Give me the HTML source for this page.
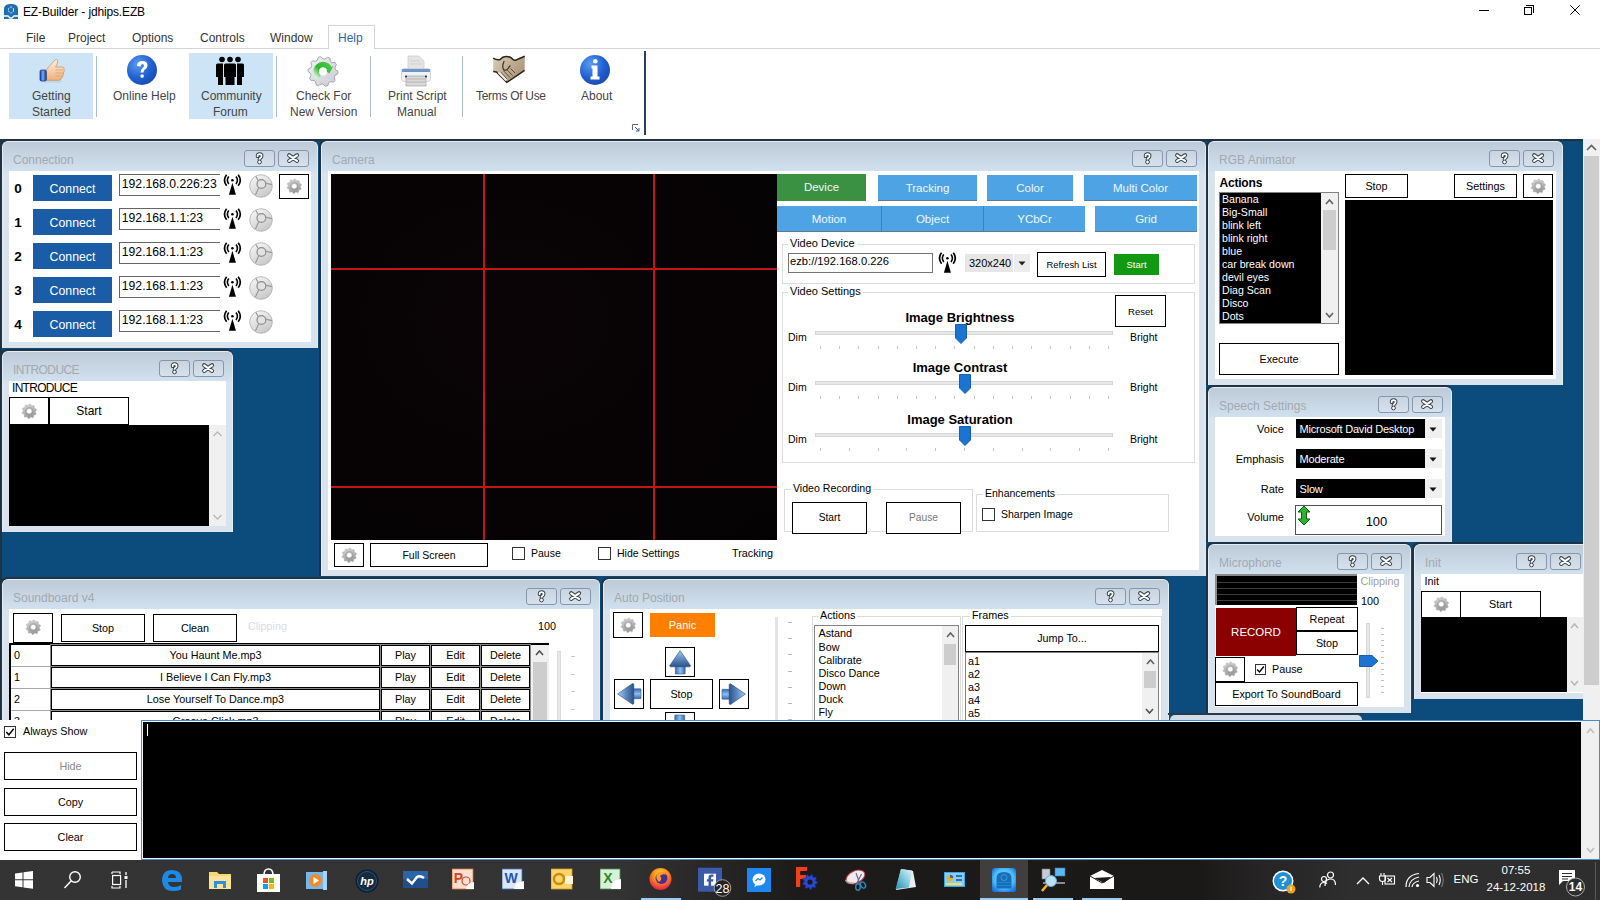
<!DOCTYPE html>
<html><head><meta charset="utf-8">
<style>
*{box-sizing:border-box;margin:0;padding:0}
html,body{width:1600px;height:900px;overflow:hidden;background:#fff;font-family:"Liberation Sans",sans-serif;font-size:12px;color:#000;position:relative}
.a{position:absolute}
.t{position:absolute;white-space:nowrap;line-height:1}
/* title bar */
#title{left:0;top:0;width:1600px;height:24px;background:#fff}
#menu{left:0;top:24px;width:1600px;height:25px;background:#fff;border-bottom:1px solid #d5d5d5}
#ribbon{left:0;top:49px;width:1600px;height:89px;background:#fff}
#desk{left:0;top:138px;width:1583px;height:582px;background:#0b4c7c;border-top:2px solid #1c3d52}
.panel{position:absolute;background:#d9e4ee;border-radius:7px 7px 0 0;overflow:hidden}
.panel .hd{position:absolute;left:0;top:0;right:0;height:30px;background:linear-gradient(#c2cfdc,#dde7f1)}
.panel .ttl{position:absolute;left:11px;top:12px;font-size:12px;color:#9aa3ab;line-height:1;white-space:nowrap}
.panel .body{position:absolute;background:#fff}
.hb{position:absolute;width:30px;height:18px;border:1px solid #8d9db0;border-radius:3px;background:linear-gradient(#e6edf4,#cdd9e5)}
.btn{position:absolute;border:2px solid #000;background:#fff;text-align:center;font-size:12px;white-space:nowrap}
#console{left:0;top:720px;width:1600px;height:138px;background:#fff}
#task{left:0;top:858px;width:1600px;height:42px;background:#2b2b2b}
</style></head><body>

<!-- TITLE BAR -->
<div id="title" class="a">
 <svg class="a" style="left:2px;top:2px" width="18" height="18" viewBox="0 0 18 18">
  <path d="M2 17 V7 Q2 2 9 2 Q16 2 16 7 V17 Z" fill="#1e6fb0"/>
  <path d="M2 14 H6 L8 16 H10 L12 14 H16" stroke="#fff" stroke-width="1.3" fill="none"/>
  <ellipse cx="9" cy="8" rx="2.6" ry="3" stroke="#d8ecff" stroke-width="1" fill="none" stroke-dasharray="2 1"/>
 </svg>
 <div class="t" style="left:23px;top:6px;font-size:12px;letter-spacing:-0.15px;color:#000">EZ-Builder - jdhips.EZB</div>
  <div class="a" style="left:1479px;top:10px;width:10px;height:1px;background:#000"></div>
 <div class="a" style="left:1524px;top:7px;width:8px;height:8px;border:1px solid #000;background:#fff"></div>
 <div class="a" style="left:1526px;top:5px;width:8px;height:8px;border-top:1px solid #000;border-right:1px solid #000"></div>
 <svg class="a" style="left:1570px;top:5px" width="10" height="10" viewBox="0 0 10 10"><path d="M0.3 0.3 L9.7 9.7 M9.7 0.3 L0.3 9.7" stroke="#000" stroke-width="1"/></svg>
</div>
<!-- MENU -->
<div id="menu" class="a">
 <div class="t" style="left:26px;top:8px;color:#333">File</div>
 <div class="t" style="left:68px;top:8px;color:#333">Project</div>
 <div class="t" style="left:132px;top:8px;color:#333">Options</div>
 <div class="t" style="left:200px;top:8px;color:#333">Controls</div>
 <div class="t" style="left:270px;top:8px;color:#333">Window</div>
 <div class="a" style="left:328px;top:1px;width:47px;height:24px;border:1px solid #d5d5d5;border-bottom:none;background:#fff"></div>
 <div class="t" style="left:338px;top:8px;color:#2a64a8">Help</div>
</div>
<div class="a" style="left:0;top:48px;width:328px;height:1px;background:#d5d5d5"></div>
<div class="a" style="left:375px;top:48px;width:1225px;height:1px;background:#d5d5d5"></div>
<!-- RIBBON -->
<div id="ribbon" class="a">
 <div class="a" style="left:9px;top:4px;width:84px;height:66px;background:#cde4f7"></div>
 <div class="a" style="left:96px;top:7px;width:1px;height:61px;background:#a9bccf"></div>
 <div class="a" style="left:189px;top:4px;width:84px;height:66px;background:#cde4f7"></div>
 <div class="a" style="left:276px;top:7px;width:1px;height:61px;background:#a9bccf"></div>
 <div class="a" style="left:370px;top:7px;width:1px;height:61px;background:#a9bccf"></div>
 <div class="a" style="left:462px;top:7px;width:1px;height:61px;background:#a9bccf"></div>
 <div class="a" style="left:644px;top:2px;width:2px;height:84px;background:#2b3d6b"></div>
 <!-- thumbs up -->
 <svg class="a" style="left:38px;top:8px" width="28" height="28" viewBox="0 0 28 28">
  <defs><linearGradient id="skin" x1="0" y1="0" x2="0" y2="1"><stop offset="0" stop-color="#fff1e4"/><stop offset="1" stop-color="#f0b07a"/></linearGradient>
  <linearGradient id="cuff" x1="0" y1="0" x2="1" y2="0"><stop offset="0" stop-color="#1a3c9c"/><stop offset=".45" stop-color="#6aaef0"/><stop offset="1" stop-color="#1a3c9c"/></linearGradient></defs>
  <ellipse cx="14" cy="24.5" rx="11" ry="1.6" fill="#b8d0e4" opacity=".6"/>
  <path d="M8 13 L17 3 Q19 1.3 19.6 3.6 Q20 6.5 17.5 10 L25 10 Q26.6 10.5 26 12.5 Q26.6 14.5 25.5 15.6 Q26 17.6 24.8 18.6 Q25 20.6 23 21.2 Q23 23.3 21 23.3 L8 23.3 Z" fill="url(#skin)" stroke="#c88a58" stroke-width=".7"/>
  <path d="M17.5 13 H25 M17.5 16 H25 M17.5 19 H23.5" stroke="#e0a070" stroke-width=".8"/>
  <rect x="2" y="13" width="6.3" height="11" rx="1.5" fill="url(#cuff)" stroke="#0e2a78" stroke-width=".7"/>
 </svg>
 <div class="t" style="left:32px;top:41px;color:#444">Getting</div>
 <div class="t" style="left:32px;top:57px;color:#444">Started</div>
 <!-- online help -->
 <svg class="a" style="left:126px;top:5px" width="32" height="32" viewBox="0 0 32 32">
  <defs><radialGradient id="bl" cx=".35" cy=".3" r=".8"><stop offset="0" stop-color="#5a9cf0"/><stop offset=".6" stop-color="#1f5ed0"/><stop offset="1" stop-color="#1847a8"/></radialGradient></defs>
  <circle cx="16" cy="16" r="15" fill="url(#bl)"/>
  <path d="M11 12 Q11 7 16.5 7 Q21.5 7 21.5 11.5 Q21.5 14 19 15.5 Q17.5 16.5 17.5 18.5 L14.5 18.5 Q14.5 15.5 16.5 14 Q18 13 18 11.5 Q18 10 16.3 10 Q14.5 10 14.5 12.5 Z" fill="#fff"/>
  <rect x="14.5" y="20.5" width="3.2" height="3.2" rx="1" fill="#fff"/>
 </svg>
 <div class="t" style="left:113px;top:41px;color:#444">Online Help</div>
 <!-- community -->
 <svg class="a" style="left:214px;top:6px" width="32" height="32" viewBox="0 0 32 32">
  <g fill="#000">
  <circle cx="8" cy="4.5" r="2.8"/><circle cx="16" cy="4.5" r="2.8"/><circle cx="24" cy="4.5" r="2.8"/>
  <path d="M2 10 Q2 8.5 3.5 8.5 H9 V30 H4 V22 H2 Z"/>
  <path d="M10 10 Q10 8.5 11.5 8.5 H20.5 Q22 8.5 22 10 V22 H20.5 V30 H11.5 V22 H10 Z"/>
  <path d="M23 8.5 H28.5 Q30 8.5 30 10 V22 H28 V30 H23 Z"/>
  </g>
  <path d="M9.5 8 V30 M22.5 8 V30" stroke="#cde4f7" stroke-width="1"/>
 </svg>
 <div class="t" style="left:201px;top:41px;color:#444">Community</div>
 <div class="t" style="left:213px;top:57px;color:#444">Forum</div>
 <!-- check version gear -->
 <svg class="a" style="left:306px;top:5px" width="34" height="34" viewBox="0 0 34 34">
  <defs><linearGradient id="gr" x1="0" y1="0" x2="1" y2="1"><stop offset="0" stop-color="#f4f4f6"/><stop offset="1" stop-color="#c8c8d0"/></linearGradient>
  <linearGradient id="grn" x1="0" y1="1" x2="1" y2="0"><stop offset="0" stop-color="#d8f4d8"/><stop offset=".45" stop-color="#2cb82c"/><stop offset="1" stop-color="#48c848"/></linearGradient></defs>
  <polygon points="32.00,17.50 31.82,19.85 28.98,21.39 28.23,23.22 29.14,26.32 27.61,28.11 24.41,27.69 22.72,28.73 21.64,31.77 19.35,32.32 17.00,30.10 15.03,29.94 12.36,31.77 10.19,30.87 9.59,27.69 8.09,26.41 4.86,26.32 3.63,24.31 5.02,21.39 4.56,19.47 2.00,17.50 2.18,15.15 5.02,13.61 5.77,11.78 4.86,8.68 6.39,6.89 9.59,7.31 11.28,6.27 12.36,3.23 14.65,2.68 17.00,4.90 18.97,5.06 21.64,3.23 23.81,4.13 24.41,7.31 25.91,8.59 29.14,8.68 30.37,10.69 28.98,13.61 29.44,15.53" fill="url(#gr)" stroke="#9c9ca8" stroke-width=".9" stroke-linejoin="round"/>
  <path d="M13.60 23.39 A6.8 6.8 0 1 1 23.16 14.63" stroke="url(#grn)" stroke-width="5.6" fill="none"/>
  <path d="M18.94 16.47 L27.24 12.05 L23.47 19.60 Z" fill="#44c044"/>
  <circle cx="17" cy="17.5" r="3.9" fill="#fff"/>
 </svg>
 <div class="t" style="left:296px;top:41px;color:#444">Check For</div>
 <div class="t" style="left:290px;top:57px;color:#444">New Version</div>
 <!-- printer -->
 <svg class="a" style="left:400px;top:6px" width="32" height="32" viewBox="0 0 32 32">
  <path d="M8 1 H19 L24 6 V15 H8 Z" fill="#e4e4e4" stroke="#c4c4c4" stroke-width=".6"/>
  <path d="M10 6 H20 M10 9 H22" stroke="#cfcfcf" stroke-width="1"/>
  <rect x="1.5" y="13.5" width="29" height="13" rx="3" fill="#eef2f6" stroke="#c8ccd2" stroke-width=".8"/>
  <rect x="2" y="14" width="28" height="3" fill="#6e96c4"/>
  <rect x="6" y="21" width="20" height="10" fill="#d8d8d8" stroke="#9a9a9a" stroke-width=".6"/>
  <path d="M7 24 H25 M7 27 H25" stroke="#b8b8b8" stroke-width="1"/>
  <circle cx="6" cy="21.5" r="1" fill="#222"/><circle cx="26" cy="21.5" r="1" fill="#222"/>
 </svg>
 <div class="t" style="left:388px;top:41px;color:#444">Print Script</div>
 <div class="t" style="left:397px;top:57px;color:#444">Manual</div>
 <!-- handshake -->
 <svg class="a" style="left:492px;top:6px" width="34" height="30" viewBox="0 0 34 30">
  <defs><linearGradient id="hs" x1="0" y1="0" x2="1" y2="0.6"><stop offset="0" stop-color="#d8cbb6"/><stop offset=".45" stop-color="#c4b49c"/><stop offset="1" stop-color="#a89478"/></linearGradient></defs>
  <path d="M1.2 3.2 Q5 5.5 8 4.6 Q11 1.4 13.6 1.4 Q17 1.2 19.2 2.8 Q21 5.4 23.2 5.4 Q28 3 32.8 1.2 L32.6 15.4 L14.8 27.4 L4.4 17 L1.2 16.6 Z" fill="url(#hs)"/>
  <path d="M1.2 3.2 Q5 5.5 8 4.6 Q11 1.4 13.6 1.4 Q17 1.2 19.2 2.8 Q21 5.4 23.2 5.4 Q28 3 32.8 1.2" stroke="#2a2218" stroke-width="1.5" fill="none"/>
  <path d="M1.2 16.6 L4.4 17 L14.8 27.4 L32.6 15.4" stroke="#2a2218" stroke-width="1.5" fill="none"/>
  <path d="M5.5 17.8 L13.5 26 L16 24.5 L8.5 16.8 Z" fill="#f2ede4"/>
  <path d="M12.2 6 Q9.5 11.5 11.8 15 Q14 15.8 15.8 13.8 Q17.2 11.8 18.4 10.4" stroke="#3a3020" stroke-width="1.2" fill="none"/>
  <path d="M8.5 16.8 L15.5 24.5 M11.5 15.8 L18 22.5 M15 14.8 L20.5 20.5 M18.5 13.5 L23 18" stroke="#5a4a36" stroke-width="1"/>
 </svg>
 <div class="t" style="left:476px;top:41px;letter-spacing:-0.3px;color:#444">Terms Of Use</div>
 <!-- about -->
 <svg class="a" style="left:579px;top:5px" width="32" height="32" viewBox="0 0 32 32">
  <circle cx="16" cy="16" r="15" fill="url(#bl)"/>
  <circle cx="16.3" cy="7.2" r="2.3" fill="#fff"/>
  <path d="M12.5 11.5 H18.5 V22.5 H20.5 V25.5 H11.5 V22.5 H13.5 V14.5 H12.5 Z" fill="#fff"/>
 </svg>
 <div class="t" style="left:581px;top:41px;color:#444">About</div>
 <svg class="a" style="left:632px;top:75px" width="8" height="8" viewBox="0 0 8 8"><path d="M0.5 6 V0.5 H6" stroke="#5a6a8a" fill="none"/><path d="M3 3 L7 7 M7 4 V7 H4" stroke="#3a5a9a" fill="none"/></svg>
</div>

<div class="a" style="left:0px;top:139px;width:1583px;height:581px;background:#0b4c7c"></div><div class="a" style="left:0px;top:139px;width:1583px;height:2px;background:#1c3545"></div><div class="a" style="left:0px;top:139px;width:2px;height:581px;background:#1c3545"></div><div class="a" style="left:0px;top:139px;width:318px;height:209px;background:#1f3345;border-radius:7px 7px 0 0"></div><div class="a" style="left:2px;top:141px;width:316px;height:207px;border-radius:6px 6px 0 0;background:#d8e3ee;border:1px solid #e4ecf4;border-bottom:none;overflow:hidden"><div class="a" style="left:0;top:0;width:316px;height:30px;background:linear-gradient(#bdcbd8 0,#c6d4e1 40%,#d2e1ef 100%)"></div></div><div class="t" style="left:13px;top:153.6px;font-size:12px;color:#a2a9b0;">Connection</div><div class="a" style="left:278px;top:150px;width:31px;height:17px;border:1px solid #8796aa;border-radius:3px;background:linear-gradient(#c8d4e0,#d6e1ec)"></div><svg class="a" style="left:278px;top:150px" width="31" height="17" viewBox="0 0 31 17"><path d="M11.2 5.3 L19 10.9 M19 5.3 L11.2 10.9" stroke="#38424e" stroke-width="4.2" stroke-linecap="round"/><path d="M11.2 5.3 L19 10.9 M19 5.3 L11.2 10.9" stroke="#fff" stroke-width="2.2" stroke-linecap="round"/></svg><div class="a" style="left:244px;top:150px;width:31px;height:17px;border:1px solid #8796aa;border-radius:3px;background:linear-gradient(#c8d4e0,#d6e1ec)"></div><svg class="a" style="left:244px;top:150px" width="31" height="17" viewBox="0 0 31 17"><path d="M13.6 6.2 Q13.6 4.2 15.6 4.2 Q17.6 4.2 17.6 6 Q17.6 7.3 16.3 8 Q15.5 8.5 15.5 9.6" stroke="#38424e" stroke-width="3.7" fill="none" stroke-linecap="round"/><path d="M13.6 6.2 Q13.6 4.2 15.6 4.2 Q17.6 4.2 17.6 6 Q17.6 7.3 16.3 8 Q15.5 8.5 15.5 9.6" stroke="#fff" stroke-width="1.7" fill="none" stroke-linecap="round"/><circle cx="15.5" cy="12" r="1.9" fill="#fff" stroke="#38424e" stroke-width="1"/></svg><div class="a" style="left:9px;top:171px;width:302px;height:171px;background:#fff"></div><div class="a" style="left:0px;top:349px;width:233px;height:183px;background:#1f3345;border-radius:7px 7px 0 0"></div><div class="a" style="left:2px;top:351px;width:231px;height:181px;border-radius:6px 6px 0 0;background:#d8e3ee;border:1px solid #e4ecf4;border-bottom:none;overflow:hidden"><div class="a" style="left:0;top:0;width:231px;height:30px;background:linear-gradient(#bdcbd8 0,#c6d4e1 40%,#d2e1ef 100%)"></div></div><div class="t" style="left:13px;top:363.6px;font-size:12px;color:#a2a9b0;letter-spacing:-0.6px">INTRODUCE</div><div class="a" style="left:193px;top:360px;width:31px;height:17px;border:1px solid #8796aa;border-radius:3px;background:linear-gradient(#c8d4e0,#d6e1ec)"></div><svg class="a" style="left:193px;top:360px" width="31" height="17" viewBox="0 0 31 17"><path d="M11.2 5.3 L19 10.9 M19 5.3 L11.2 10.9" stroke="#38424e" stroke-width="4.2" stroke-linecap="round"/><path d="M11.2 5.3 L19 10.9 M19 5.3 L11.2 10.9" stroke="#fff" stroke-width="2.2" stroke-linecap="round"/></svg><div class="a" style="left:159px;top:360px;width:31px;height:17px;border:1px solid #8796aa;border-radius:3px;background:linear-gradient(#c8d4e0,#d6e1ec)"></div><svg class="a" style="left:159px;top:360px" width="31" height="17" viewBox="0 0 31 17"><path d="M13.6 6.2 Q13.6 4.2 15.6 4.2 Q17.6 4.2 17.6 6 Q17.6 7.3 16.3 8 Q15.5 8.5 15.5 9.6" stroke="#38424e" stroke-width="3.7" fill="none" stroke-linecap="round"/><path d="M13.6 6.2 Q13.6 4.2 15.6 4.2 Q17.6 4.2 17.6 6 Q17.6 7.3 16.3 8 Q15.5 8.5 15.5 9.6" stroke="#fff" stroke-width="1.7" fill="none" stroke-linecap="round"/><circle cx="15.5" cy="12" r="1.9" fill="#fff" stroke="#38424e" stroke-width="1"/></svg><div class="a" style="left:9px;top:381px;width:217px;height:145px;background:#fff"></div><div class="a" style="left:319px;top:139px;width:887px;height:437px;background:#1f3345;border-radius:7px 7px 0 0"></div><div class="a" style="left:321px;top:141px;width:885px;height:435px;border-radius:6px 6px 0 0;background:#d8e3ee;border:1px solid #e4ecf4;border-bottom:none;overflow:hidden"><div class="a" style="left:0;top:0;width:885px;height:30px;background:linear-gradient(#bdcbd8 0,#c6d4e1 40%,#d2e1ef 100%)"></div></div><div class="t" style="left:332px;top:153.6px;font-size:12px;color:#a2a9b0;">Camera</div><div class="a" style="left:1166px;top:150px;width:31px;height:17px;border:1px solid #8796aa;border-radius:3px;background:linear-gradient(#c8d4e0,#d6e1ec)"></div><svg class="a" style="left:1166px;top:150px" width="31" height="17" viewBox="0 0 31 17"><path d="M11.2 5.3 L19 10.9 M19 5.3 L11.2 10.9" stroke="#38424e" stroke-width="4.2" stroke-linecap="round"/><path d="M11.2 5.3 L19 10.9 M19 5.3 L11.2 10.9" stroke="#fff" stroke-width="2.2" stroke-linecap="round"/></svg><div class="a" style="left:1132px;top:150px;width:31px;height:17px;border:1px solid #8796aa;border-radius:3px;background:linear-gradient(#c8d4e0,#d6e1ec)"></div><svg class="a" style="left:1132px;top:150px" width="31" height="17" viewBox="0 0 31 17"><path d="M13.6 6.2 Q13.6 4.2 15.6 4.2 Q17.6 4.2 17.6 6 Q17.6 7.3 16.3 8 Q15.5 8.5 15.5 9.6" stroke="#38424e" stroke-width="3.7" fill="none" stroke-linecap="round"/><path d="M13.6 6.2 Q13.6 4.2 15.6 4.2 Q17.6 4.2 17.6 6 Q17.6 7.3 16.3 8 Q15.5 8.5 15.5 9.6" stroke="#fff" stroke-width="1.7" fill="none" stroke-linecap="round"/><circle cx="15.5" cy="12" r="1.9" fill="#fff" stroke="#38424e" stroke-width="1"/></svg><div class="a" style="left:328px;top:171px;width:871px;height:399px;background:#fff"></div><div class="a" style="left:1206px;top:139px;width:357px;height:246px;background:#1f3345;border-radius:7px 7px 0 0"></div><div class="a" style="left:1208px;top:141px;width:355px;height:244px;border-radius:6px 6px 0 0;background:#d8e3ee;border:1px solid #e4ecf4;border-bottom:none;overflow:hidden"><div class="a" style="left:0;top:0;width:355px;height:30px;background:linear-gradient(#bdcbd8 0,#c6d4e1 40%,#d2e1ef 100%)"></div></div><div class="t" style="left:1219px;top:153.6px;font-size:12px;color:#a2a9b0;">RGB Animator</div><div class="a" style="left:1523px;top:150px;width:31px;height:17px;border:1px solid #8796aa;border-radius:3px;background:linear-gradient(#c8d4e0,#d6e1ec)"></div><svg class="a" style="left:1523px;top:150px" width="31" height="17" viewBox="0 0 31 17"><path d="M11.2 5.3 L19 10.9 M19 5.3 L11.2 10.9" stroke="#38424e" stroke-width="4.2" stroke-linecap="round"/><path d="M11.2 5.3 L19 10.9 M19 5.3 L11.2 10.9" stroke="#fff" stroke-width="2.2" stroke-linecap="round"/></svg><div class="a" style="left:1489px;top:150px;width:31px;height:17px;border:1px solid #8796aa;border-radius:3px;background:linear-gradient(#c8d4e0,#d6e1ec)"></div><svg class="a" style="left:1489px;top:150px" width="31" height="17" viewBox="0 0 31 17"><path d="M13.6 6.2 Q13.6 4.2 15.6 4.2 Q17.6 4.2 17.6 6 Q17.6 7.3 16.3 8 Q15.5 8.5 15.5 9.6" stroke="#38424e" stroke-width="3.7" fill="none" stroke-linecap="round"/><path d="M13.6 6.2 Q13.6 4.2 15.6 4.2 Q17.6 4.2 17.6 6 Q17.6 7.3 16.3 8 Q15.5 8.5 15.5 9.6" stroke="#fff" stroke-width="1.7" fill="none" stroke-linecap="round"/><circle cx="15.5" cy="12" r="1.9" fill="#fff" stroke="#38424e" stroke-width="1"/></svg><div class="a" style="left:1215px;top:171px;width:341px;height:208px;background:#fff"></div><div class="a" style="left:1206px;top:385px;width:246px;height:157px;background:#1f3345;border-radius:7px 7px 0 0"></div><div class="a" style="left:1208px;top:387px;width:244px;height:155px;border-radius:6px 6px 0 0;background:#d8e3ee;border:1px solid #e4ecf4;border-bottom:none;overflow:hidden"><div class="a" style="left:0;top:0;width:244px;height:30px;background:linear-gradient(#bdcbd8 0,#c6d4e1 40%,#d2e1ef 100%)"></div></div><div class="t" style="left:1219px;top:399.6px;font-size:12px;color:#a2a9b0;">Speech Settings</div><div class="a" style="left:1412px;top:396px;width:31px;height:17px;border:1px solid #8796aa;border-radius:3px;background:linear-gradient(#c8d4e0,#d6e1ec)"></div><svg class="a" style="left:1412px;top:396px" width="31" height="17" viewBox="0 0 31 17"><path d="M11.2 5.3 L19 10.9 M19 5.3 L11.2 10.9" stroke="#38424e" stroke-width="4.2" stroke-linecap="round"/><path d="M11.2 5.3 L19 10.9 M19 5.3 L11.2 10.9" stroke="#fff" stroke-width="2.2" stroke-linecap="round"/></svg><div class="a" style="left:1378px;top:396px;width:31px;height:17px;border:1px solid #8796aa;border-radius:3px;background:linear-gradient(#c8d4e0,#d6e1ec)"></div><svg class="a" style="left:1378px;top:396px" width="31" height="17" viewBox="0 0 31 17"><path d="M13.6 6.2 Q13.6 4.2 15.6 4.2 Q17.6 4.2 17.6 6 Q17.6 7.3 16.3 8 Q15.5 8.5 15.5 9.6" stroke="#38424e" stroke-width="3.7" fill="none" stroke-linecap="round"/><path d="M13.6 6.2 Q13.6 4.2 15.6 4.2 Q17.6 4.2 17.6 6 Q17.6 7.3 16.3 8 Q15.5 8.5 15.5 9.6" stroke="#fff" stroke-width="1.7" fill="none" stroke-linecap="round"/><circle cx="15.5" cy="12" r="1.9" fill="#fff" stroke="#38424e" stroke-width="1"/></svg><div class="a" style="left:1215px;top:417px;width:230px;height:119px;background:#fff"></div><div class="a" style="left:1206px;top:542px;width:205px;height:171px;background:#1f3345;border-radius:7px 7px 0 0"></div><div class="a" style="left:1208px;top:544px;width:203px;height:169px;border-radius:6px 6px 0 0;background:#d8e3ee;border:1px solid #e4ecf4;border-bottom:none;overflow:hidden"><div class="a" style="left:0;top:0;width:203px;height:30px;background:linear-gradient(#bdcbd8 0,#c6d4e1 40%,#d2e1ef 100%)"></div></div><div class="t" style="left:1219px;top:556.6px;font-size:12px;color:#a2a9b0;">Microphone</div><div class="a" style="left:1371px;top:553px;width:31px;height:17px;border:1px solid #8796aa;border-radius:3px;background:linear-gradient(#c8d4e0,#d6e1ec)"></div><svg class="a" style="left:1371px;top:553px" width="31" height="17" viewBox="0 0 31 17"><path d="M11.2 5.3 L19 10.9 M19 5.3 L11.2 10.9" stroke="#38424e" stroke-width="4.2" stroke-linecap="round"/><path d="M11.2 5.3 L19 10.9 M19 5.3 L11.2 10.9" stroke="#fff" stroke-width="2.2" stroke-linecap="round"/></svg><div class="a" style="left:1337px;top:553px;width:31px;height:17px;border:1px solid #8796aa;border-radius:3px;background:linear-gradient(#c8d4e0,#d6e1ec)"></div><svg class="a" style="left:1337px;top:553px" width="31" height="17" viewBox="0 0 31 17"><path d="M13.6 6.2 Q13.6 4.2 15.6 4.2 Q17.6 4.2 17.6 6 Q17.6 7.3 16.3 8 Q15.5 8.5 15.5 9.6" stroke="#38424e" stroke-width="3.7" fill="none" stroke-linecap="round"/><path d="M13.6 6.2 Q13.6 4.2 15.6 4.2 Q17.6 4.2 17.6 6 Q17.6 7.3 16.3 8 Q15.5 8.5 15.5 9.6" stroke="#fff" stroke-width="1.7" fill="none" stroke-linecap="round"/><circle cx="15.5" cy="12" r="1.9" fill="#fff" stroke="#38424e" stroke-width="1"/></svg><div class="a" style="left:1215px;top:574px;width:189px;height:133px;background:#fff"></div><div class="a" style="left:1412px;top:542px;width:178px;height:157px;background:#1f3345;border-radius:7px 7px 0 0"></div><div class="a" style="left:1414px;top:544px;width:176px;height:155px;border-radius:6px 6px 0 0;background:#d8e3ee;border:1px solid #e4ecf4;border-bottom:none;overflow:hidden"><div class="a" style="left:0;top:0;width:176px;height:30px;background:linear-gradient(#bdcbd8 0,#c6d4e1 40%,#d2e1ef 100%)"></div></div><div class="t" style="left:1425px;top:556.6px;font-size:12px;color:#a2a9b0;">Init</div><div class="a" style="left:1550px;top:553px;width:31px;height:17px;border:1px solid #8796aa;border-radius:3px;background:linear-gradient(#c8d4e0,#d6e1ec)"></div><svg class="a" style="left:1550px;top:553px" width="31" height="17" viewBox="0 0 31 17"><path d="M11.2 5.3 L19 10.9 M19 5.3 L11.2 10.9" stroke="#38424e" stroke-width="4.2" stroke-linecap="round"/><path d="M11.2 5.3 L19 10.9 M19 5.3 L11.2 10.9" stroke="#fff" stroke-width="2.2" stroke-linecap="round"/></svg><div class="a" style="left:1516px;top:553px;width:31px;height:17px;border:1px solid #8796aa;border-radius:3px;background:linear-gradient(#c8d4e0,#d6e1ec)"></div><svg class="a" style="left:1516px;top:553px" width="31" height="17" viewBox="0 0 31 17"><path d="M13.6 6.2 Q13.6 4.2 15.6 4.2 Q17.6 4.2 17.6 6 Q17.6 7.3 16.3 8 Q15.5 8.5 15.5 9.6" stroke="#38424e" stroke-width="3.7" fill="none" stroke-linecap="round"/><path d="M13.6 6.2 Q13.6 4.2 15.6 4.2 Q17.6 4.2 17.6 6 Q17.6 7.3 16.3 8 Q15.5 8.5 15.5 9.6" stroke="#fff" stroke-width="1.7" fill="none" stroke-linecap="round"/><circle cx="15.5" cy="12" r="1.9" fill="#fff" stroke="#38424e" stroke-width="1"/></svg><div class="a" style="left:1421px;top:574px;width:162px;height:119px;background:#fff"></div><div class="a" style="left:0px;top:577px;width:600px;height:143px;background:#1f3345;border-radius:7px 7px 0 0"></div><div class="a" style="left:2px;top:579px;width:598px;height:141px;border-radius:6px 6px 0 0;background:#d8e3ee;border:1px solid #e4ecf4;border-bottom:none;overflow:hidden"><div class="a" style="left:0;top:0;width:598px;height:30px;background:linear-gradient(#bdcbd8 0,#c6d4e1 40%,#d2e1ef 100%)"></div></div><div class="t" style="left:13px;top:591.6px;font-size:12px;color:#a2a9b0;">Soundboard v4</div><div class="a" style="left:560px;top:588px;width:31px;height:17px;border:1px solid #8796aa;border-radius:3px;background:linear-gradient(#c8d4e0,#d6e1ec)"></div><svg class="a" style="left:560px;top:588px" width="31" height="17" viewBox="0 0 31 17"><path d="M11.2 5.3 L19 10.9 M19 5.3 L11.2 10.9" stroke="#38424e" stroke-width="4.2" stroke-linecap="round"/><path d="M11.2 5.3 L19 10.9 M19 5.3 L11.2 10.9" stroke="#fff" stroke-width="2.2" stroke-linecap="round"/></svg><div class="a" style="left:526px;top:588px;width:31px;height:17px;border:1px solid #8796aa;border-radius:3px;background:linear-gradient(#c8d4e0,#d6e1ec)"></div><svg class="a" style="left:526px;top:588px" width="31" height="17" viewBox="0 0 31 17"><path d="M13.6 6.2 Q13.6 4.2 15.6 4.2 Q17.6 4.2 17.6 6 Q17.6 7.3 16.3 8 Q15.5 8.5 15.5 9.6" stroke="#38424e" stroke-width="3.7" fill="none" stroke-linecap="round"/><path d="M13.6 6.2 Q13.6 4.2 15.6 4.2 Q17.6 4.2 17.6 6 Q17.6 7.3 16.3 8 Q15.5 8.5 15.5 9.6" stroke="#fff" stroke-width="1.7" fill="none" stroke-linecap="round"/><circle cx="15.5" cy="12" r="1.9" fill="#fff" stroke="#38424e" stroke-width="1"/></svg><div class="a" style="left:9px;top:609px;width:584px;height:140px;background:#fff"></div><div class="a" style="left:601px;top:577px;width:568px;height:143px;background:#1f3345;border-radius:7px 7px 0 0"></div><div class="a" style="left:603px;top:579px;width:566px;height:141px;border-radius:6px 6px 0 0;background:#d8e3ee;border:1px solid #e4ecf4;border-bottom:none;overflow:hidden"><div class="a" style="left:0;top:0;width:566px;height:30px;background:linear-gradient(#bdcbd8 0,#c6d4e1 40%,#d2e1ef 100%)"></div></div><div class="t" style="left:614px;top:591.6px;font-size:12px;color:#a2a9b0;">Auto Position</div><div class="a" style="left:1129px;top:588px;width:31px;height:17px;border:1px solid #8796aa;border-radius:3px;background:linear-gradient(#c8d4e0,#d6e1ec)"></div><svg class="a" style="left:1129px;top:588px" width="31" height="17" viewBox="0 0 31 17"><path d="M11.2 5.3 L19 10.9 M19 5.3 L11.2 10.9" stroke="#38424e" stroke-width="4.2" stroke-linecap="round"/><path d="M11.2 5.3 L19 10.9 M19 5.3 L11.2 10.9" stroke="#fff" stroke-width="2.2" stroke-linecap="round"/></svg><div class="a" style="left:1095px;top:588px;width:31px;height:17px;border:1px solid #8796aa;border-radius:3px;background:linear-gradient(#c8d4e0,#d6e1ec)"></div><svg class="a" style="left:1095px;top:588px" width="31" height="17" viewBox="0 0 31 17"><path d="M13.6 6.2 Q13.6 4.2 15.6 4.2 Q17.6 4.2 17.6 6 Q17.6 7.3 16.3 8 Q15.5 8.5 15.5 9.6" stroke="#38424e" stroke-width="3.7" fill="none" stroke-linecap="round"/><path d="M13.6 6.2 Q13.6 4.2 15.6 4.2 Q17.6 4.2 17.6 6 Q17.6 7.3 16.3 8 Q15.5 8.5 15.5 9.6" stroke="#fff" stroke-width="1.7" fill="none" stroke-linecap="round"/><circle cx="15.5" cy="12" r="1.9" fill="#fff" stroke="#38424e" stroke-width="1"/></svg><div class="a" style="left:610px;top:609px;width:552px;height:140px;background:#fff"></div><div class="t" style="left:14.3px;top:182.20000000000002px;font-size:13.6px;color:#000;font-weight:bold">0</div><div class="a" style="left:33px;top:175px;width:79px;height:26px;background:#1a5da6;border:0px solid #000"></div><div class="t" style="left:33px;width:79px;text-align:center;top:183.1px;font-size:12.3px;color:#fff;">Connect</div><div class="a" style="left:119px;top:174px;width:101px;height:22px;border:1px solid #646464;border-right:none;background:#fff"></div><div class="t" style="left:121.8px;top:177.79999999999998px;font-size:12.2px;color:#000;">192.168.0.226:23</div><svg class="a" style="left:223px;top:174px" width="20" height="22" viewBox="0 0 20 22"><path d="M3.6 0.8 Q-0.6 6.3 3.6 11.8 M15.2 0.8 Q19.4 6.3 15.2 11.8" stroke="#000" stroke-width="1.7" fill="none"/><path d="M5.8 2.6 Q2.9 6.3 5.8 10 M13 2.6 Q15.9 6.3 13 10" stroke="#000" stroke-width="1.6" fill="none"/><circle cx="9.4" cy="6.3" r="1.3" fill="#000"/><path d="M9.4 8.8 L12.9 20.7 H5.9 Z" fill="#000"/></svg><svg class="a" style="left:248.5px;top:173.5px" width="24" height="24" viewBox="0 0 24 24"><defs><linearGradient id="g1" x1=".2" y1="0" x2=".8" y2="1"><stop offset="0" stop-color="#f6f6f6"/><stop offset=".5" stop-color="#dedede"/><stop offset="1" stop-color="#c4c4c4"/></linearGradient></defs><circle cx="12" cy="12" r="11.3" fill="url(#g1)" stroke="#b4b4b4" stroke-width=".9"/><circle cx="12.4" cy="10" r="4.4" fill="#e2e2e2" stroke="#8e8e8e" stroke-width="1.2"/><path d="M9.3 6.8 L6.8 2.2 M16.6 9.2 L23 10.6 M9.6 14 L6.5 21" stroke="#9a9a9a" stroke-width="1.2" fill="none"/></svg><div class="t" style="left:14.3px;top:216.20000000000002px;font-size:13.6px;color:#000;font-weight:bold">1</div><div class="a" style="left:33px;top:209px;width:79px;height:26px;background:#1a5da6;border:0px solid #000"></div><div class="t" style="left:33px;width:79px;text-align:center;top:217.1px;font-size:12.3px;color:#fff;">Connect</div><div class="a" style="left:119px;top:208px;width:101px;height:22px;border:1px solid #646464;border-right:none;background:#fff"></div><div class="t" style="left:121.8px;top:211.79999999999998px;font-size:12.2px;color:#000;">192.168.1.1:23</div><svg class="a" style="left:223px;top:208px" width="20" height="22" viewBox="0 0 20 22"><path d="M3.6 0.8 Q-0.6 6.3 3.6 11.8 M15.2 0.8 Q19.4 6.3 15.2 11.8" stroke="#000" stroke-width="1.7" fill="none"/><path d="M5.8 2.6 Q2.9 6.3 5.8 10 M13 2.6 Q15.9 6.3 13 10" stroke="#000" stroke-width="1.6" fill="none"/><circle cx="9.4" cy="6.3" r="1.3" fill="#000"/><path d="M9.4 8.8 L12.9 20.7 H5.9 Z" fill="#000"/></svg><svg class="a" style="left:248.5px;top:207.5px" width="24" height="24" viewBox="0 0 24 24"><defs><linearGradient id="g2" x1=".2" y1="0" x2=".8" y2="1"><stop offset="0" stop-color="#f6f6f6"/><stop offset=".5" stop-color="#dedede"/><stop offset="1" stop-color="#c4c4c4"/></linearGradient></defs><circle cx="12" cy="12" r="11.3" fill="url(#g2)" stroke="#b4b4b4" stroke-width=".9"/><circle cx="12.4" cy="10" r="4.4" fill="#e2e2e2" stroke="#8e8e8e" stroke-width="1.2"/><path d="M9.3 6.8 L6.8 2.2 M16.6 9.2 L23 10.6 M9.6 14 L6.5 21" stroke="#9a9a9a" stroke-width="1.2" fill="none"/></svg><div class="t" style="left:14.3px;top:250.20000000000002px;font-size:13.6px;color:#000;font-weight:bold">2</div><div class="a" style="left:33px;top:243px;width:79px;height:26px;background:#1a5da6;border:0px solid #000"></div><div class="t" style="left:33px;width:79px;text-align:center;top:251.1px;font-size:12.3px;color:#fff;">Connect</div><div class="a" style="left:119px;top:242px;width:101px;height:22px;border:1px solid #646464;border-right:none;background:#fff"></div><div class="t" style="left:121.8px;top:245.79999999999998px;font-size:12.2px;color:#000;">192.168.1.1:23</div><svg class="a" style="left:223px;top:242px" width="20" height="22" viewBox="0 0 20 22"><path d="M3.6 0.8 Q-0.6 6.3 3.6 11.8 M15.2 0.8 Q19.4 6.3 15.2 11.8" stroke="#000" stroke-width="1.7" fill="none"/><path d="M5.8 2.6 Q2.9 6.3 5.8 10 M13 2.6 Q15.9 6.3 13 10" stroke="#000" stroke-width="1.6" fill="none"/><circle cx="9.4" cy="6.3" r="1.3" fill="#000"/><path d="M9.4 8.8 L12.9 20.7 H5.9 Z" fill="#000"/></svg><svg class="a" style="left:248.5px;top:241.5px" width="24" height="24" viewBox="0 0 24 24"><defs><linearGradient id="g3" x1=".2" y1="0" x2=".8" y2="1"><stop offset="0" stop-color="#f6f6f6"/><stop offset=".5" stop-color="#dedede"/><stop offset="1" stop-color="#c4c4c4"/></linearGradient></defs><circle cx="12" cy="12" r="11.3" fill="url(#g3)" stroke="#b4b4b4" stroke-width=".9"/><circle cx="12.4" cy="10" r="4.4" fill="#e2e2e2" stroke="#8e8e8e" stroke-width="1.2"/><path d="M9.3 6.8 L6.8 2.2 M16.6 9.2 L23 10.6 M9.6 14 L6.5 21" stroke="#9a9a9a" stroke-width="1.2" fill="none"/></svg><div class="t" style="left:14.3px;top:284.2px;font-size:13.6px;color:#000;font-weight:bold">3</div><div class="a" style="left:33px;top:277px;width:79px;height:26px;background:#1a5da6;border:0px solid #000"></div><div class="t" style="left:33px;width:79px;text-align:center;top:285.1px;font-size:12.3px;color:#fff;">Connect</div><div class="a" style="left:119px;top:276px;width:101px;height:22px;border:1px solid #646464;border-right:none;background:#fff"></div><div class="t" style="left:121.8px;top:279.8px;font-size:12.2px;color:#000;">192.168.1.1:23</div><svg class="a" style="left:223px;top:276px" width="20" height="22" viewBox="0 0 20 22"><path d="M3.6 0.8 Q-0.6 6.3 3.6 11.8 M15.2 0.8 Q19.4 6.3 15.2 11.8" stroke="#000" stroke-width="1.7" fill="none"/><path d="M5.8 2.6 Q2.9 6.3 5.8 10 M13 2.6 Q15.9 6.3 13 10" stroke="#000" stroke-width="1.6" fill="none"/><circle cx="9.4" cy="6.3" r="1.3" fill="#000"/><path d="M9.4 8.8 L12.9 20.7 H5.9 Z" fill="#000"/></svg><svg class="a" style="left:248.5px;top:275.5px" width="24" height="24" viewBox="0 0 24 24"><defs><linearGradient id="g4" x1=".2" y1="0" x2=".8" y2="1"><stop offset="0" stop-color="#f6f6f6"/><stop offset=".5" stop-color="#dedede"/><stop offset="1" stop-color="#c4c4c4"/></linearGradient></defs><circle cx="12" cy="12" r="11.3" fill="url(#g4)" stroke="#b4b4b4" stroke-width=".9"/><circle cx="12.4" cy="10" r="4.4" fill="#e2e2e2" stroke="#8e8e8e" stroke-width="1.2"/><path d="M9.3 6.8 L6.8 2.2 M16.6 9.2 L23 10.6 M9.6 14 L6.5 21" stroke="#9a9a9a" stroke-width="1.2" fill="none"/></svg><div class="t" style="left:14.3px;top:318.2px;font-size:13.6px;color:#000;font-weight:bold">4</div><div class="a" style="left:33px;top:311px;width:79px;height:26px;background:#1a5da6;border:0px solid #000"></div><div class="t" style="left:33px;width:79px;text-align:center;top:319.1px;font-size:12.3px;color:#fff;">Connect</div><div class="a" style="left:119px;top:310px;width:101px;height:22px;border:1px solid #646464;border-right:none;background:#fff"></div><div class="t" style="left:121.8px;top:313.8px;font-size:12.2px;color:#000;">192.168.1.1:23</div><svg class="a" style="left:223px;top:310px" width="20" height="22" viewBox="0 0 20 22"><path d="M3.6 0.8 Q-0.6 6.3 3.6 11.8 M15.2 0.8 Q19.4 6.3 15.2 11.8" stroke="#000" stroke-width="1.7" fill="none"/><path d="M5.8 2.6 Q2.9 6.3 5.8 10 M13 2.6 Q15.9 6.3 13 10" stroke="#000" stroke-width="1.6" fill="none"/><circle cx="9.4" cy="6.3" r="1.3" fill="#000"/><path d="M9.4 8.8 L12.9 20.7 H5.9 Z" fill="#000"/></svg><svg class="a" style="left:248.5px;top:309.5px" width="24" height="24" viewBox="0 0 24 24"><defs><linearGradient id="g5" x1=".2" y1="0" x2=".8" y2="1"><stop offset="0" stop-color="#f6f6f6"/><stop offset=".5" stop-color="#dedede"/><stop offset="1" stop-color="#c4c4c4"/></linearGradient></defs><circle cx="12" cy="12" r="11.3" fill="url(#g5)" stroke="#b4b4b4" stroke-width=".9"/><circle cx="12.4" cy="10" r="4.4" fill="#e2e2e2" stroke="#8e8e8e" stroke-width="1.2"/><path d="M9.3 6.8 L6.8 2.2 M16.6 9.2 L23 10.6 M9.6 14 L6.5 21" stroke="#9a9a9a" stroke-width="1.2" fill="none"/></svg><div class="a" style="left:279px;top:174px;width:30px;height:25px;background:#fff;border:1px solid #000"></div><svg class="a" style="left:285.7px;top:178.2px" width="16.6" height="16.6" viewBox="0 0 16.6 16.6"><defs><linearGradient id="g6" x1="0" y1="0" x2="0.3" y2="1"><stop offset="0" stop-color="#dadada"/><stop offset="1" stop-color="#9a9a9a"/></linearGradient></defs><polygon points="8.30,1.00 9.44,1.09 10.19,2.47 11.08,2.84 12.59,2.39 13.46,3.14 13.26,4.70 13.76,5.52 15.24,6.04 15.51,7.16 14.43,8.30 14.36,9.26 15.24,10.56 14.80,11.61 13.26,11.90 12.64,12.64 12.59,14.21 11.61,14.80 10.19,14.13 9.26,14.36 8.30,15.60 7.16,15.51 6.41,14.13 5.52,13.76 4.01,14.21 3.14,13.46 3.34,11.90 2.84,11.08 1.36,10.56 1.09,9.44 2.17,8.30 2.24,7.34 1.36,6.04 1.80,4.99 3.34,4.70 3.96,3.96 4.01,2.39 4.99,1.80 6.41,2.47 7.34,2.24" fill="url(#g6)" stroke="#b0b0b0" stroke-width=".5" stroke-linejoin="round"/><circle cx="8.3" cy="8.3" r="3.796" fill="none" stroke="#8a8a8a" stroke-width="1" opacity=".45"/><circle cx="8.3" cy="8.3" r="2.3" fill="#fff"/></svg><div class="t" style="left:12px;top:381.6px;font-size:12px;color:#000;letter-spacing:-0.7px">INTRODUCE</div><div class="a" style="left:9px;top:397px;width:40px;height:28px;background:#fff;border:1px solid #000"></div><svg class="a" style="left:20.7px;top:402.7px" width="16.6" height="16.6" viewBox="0 0 16.6 16.6"><defs><linearGradient id="g7" x1="0" y1="0" x2="0.3" y2="1"><stop offset="0" stop-color="#dadada"/><stop offset="1" stop-color="#9a9a9a"/></linearGradient></defs><polygon points="8.30,1.00 9.44,1.09 10.19,2.47 11.08,2.84 12.59,2.39 13.46,3.14 13.26,4.70 13.76,5.52 15.24,6.04 15.51,7.16 14.43,8.30 14.36,9.26 15.24,10.56 14.80,11.61 13.26,11.90 12.64,12.64 12.59,14.21 11.61,14.80 10.19,14.13 9.26,14.36 8.30,15.60 7.16,15.51 6.41,14.13 5.52,13.76 4.01,14.21 3.14,13.46 3.34,11.90 2.84,11.08 1.36,10.56 1.09,9.44 2.17,8.30 2.24,7.34 1.36,6.04 1.80,4.99 3.34,4.70 3.96,3.96 4.01,2.39 4.99,1.80 6.41,2.47 7.34,2.24" fill="url(#g7)" stroke="#b0b0b0" stroke-width=".5" stroke-linejoin="round"/><circle cx="8.3" cy="8.3" r="3.796" fill="none" stroke="#8a8a8a" stroke-width="1" opacity=".45"/><circle cx="8.3" cy="8.3" r="2.3" fill="#fff"/></svg><div class="a" style="left:49px;top:397px;width:80px;height:28px;background:#fff;border:1px solid #000"></div><div class="t" style="left:49px;width:80px;text-align:center;top:405.2px;font-size:12px;color:#000;">Start</div><div class="a" style="left:9px;top:425px;width:200px;height:101px;background:#000"></div><div class="a" style="left:209px;top:425px;width:17px;height:101px;background:#f0f0f0"></div><svg class="a" style="left:212px;top:430px" width="11" height="8" viewBox="0 0 11 8"><path d="M1.5 6 L5.5 2 L9.5 6" stroke="#b8b8b8" stroke-width="1.3" fill="none"/></svg><svg class="a" style="left:212px;top:513px" width="11" height="8" viewBox="0 0 11 8"><path d="M1.5 2 L5.5 6 L9.5 2" stroke="#b8b8b8" stroke-width="1.3" fill="none"/></svg><div class="a" style="left:331px;top:174px;width:446px;height:366px;background:radial-gradient(ellipse at 40% 40%,#0a0406,#040203)"></div><div class="a" style="left:483px;top:174px;width:2px;height:366px;background:#c41414"></div><div class="a" style="left:653px;top:174px;width:2px;height:366px;background:#c41414"></div><div class="a" style="left:331px;top:268px;width:446px;height:2px;background:#c41414"></div><div class="a" style="left:331px;top:486px;width:446px;height:2px;background:#c41414"></div><div class="a" style="left:777px;top:174px;width:89px;height:27px;background:#3a9142"></div><div class="t" style="left:777px;width:89px;text-align:center;top:182.3px;font-size:11.5px;color:#eef8ff">Device</div><div class="a" style="left:878px;top:175px;width:99px;height:26px;background:#4ea3e5"></div><div class="a" style="left:878px;top:200px;width:99px;height:1px;background:#5d7890"></div><div class="t" style="left:878px;width:99px;text-align:center;top:182.8px;font-size:11.5px;color:#eef8ff">Tracking</div><div class="a" style="left:987px;top:175px;width:86px;height:26px;background:#4ea3e5"></div><div class="a" style="left:987px;top:200px;width:86px;height:1px;background:#5d7890"></div><div class="t" style="left:987px;width:86px;text-align:center;top:182.8px;font-size:11.5px;color:#eef8ff">Color</div><div class="a" style="left:1084px;top:175px;width:113px;height:26px;background:#4ea3e5"></div><div class="a" style="left:1084px;top:200px;width:113px;height:1px;background:#5d7890"></div><div class="t" style="left:1084px;width:113px;text-align:center;top:182.8px;font-size:11.5px;color:#eef8ff">Multi Color</div><div class="a" style="left:777px;top:206px;width:104px;height:26px;background:#4ea3e5"></div><div class="a" style="left:777px;top:231px;width:104px;height:1px;background:#5d7890"></div><div class="t" style="left:777px;width:104px;text-align:center;top:213.8px;font-size:11.5px;color:#eef8ff">Motion</div><div class="a" style="left:882px;top:206px;width:101px;height:26px;background:#4ea3e5"></div><div class="a" style="left:882px;top:231px;width:101px;height:1px;background:#5d7890"></div><div class="t" style="left:882px;width:101px;text-align:center;top:213.8px;font-size:11.5px;color:#eef8ff">Object</div><div class="a" style="left:984px;top:206px;width:101px;height:26px;background:#4ea3e5"></div><div class="a" style="left:984px;top:231px;width:101px;height:1px;background:#5d7890"></div><div class="t" style="left:984px;width:101px;text-align:center;top:213.8px;font-size:11.5px;color:#eef8ff">YCbCr</div><div class="a" style="left:1095px;top:206px;width:102px;height:26px;background:#4ea3e5"></div><div class="a" style="left:1095px;top:231px;width:102px;height:1px;background:#5d7890"></div><div class="t" style="left:1095px;width:102px;text-align:center;top:213.8px;font-size:11.5px;color:#eef8ff">Grid</div><div class="a" style="left:881px;top:206px;width:1px;height:26px;background:#5d7890"></div><div class="a" style="left:983px;top:206px;width:1px;height:26px;background:#5d7890"></div><div class="a" style="left:782px;top:244px;width:413px;height:40px;border:1px solid #dcdcdc"></div><div class="t" style="left:788px;top:236.7px;font-size:11px;color:#000;background:#fff;padding:1px 2px">Video Device</div><div class="a" style="left:788px;top:253px;width:145px;height:20px;border:1px solid #747474;background:#fff"></div><div class="t" style="left:790px;top:255.7px;font-size:11.2px;color:#000;">ezb://192.168.0.226</div><svg class="a" style="left:938px;top:252px" width="20" height="22" viewBox="0 0 20 22"><path d="M3.6 0.8 Q-0.6 6.3 3.6 11.8 M15.2 0.8 Q19.4 6.3 15.2 11.8" stroke="#000" stroke-width="1.7" fill="none"/><path d="M5.8 2.6 Q2.9 6.3 5.8 10 M13 2.6 Q15.9 6.3 13 10" stroke="#000" stroke-width="1.6" fill="none"/><circle cx="9.4" cy="6.3" r="1.3" fill="#000"/><path d="M9.4 8.8 L12.9 20.7 H5.9 Z" fill="#000"/></svg><div class="a" style="left:965px;top:254px;width:48px;height:18px;background:#e6e6e6"></div><div class="t" style="left:969px;top:257.7px;font-size:11px;color:#000;">320x240</div><div class="a" style="left:1014px;top:254px;width:16px;height:18px;background:#ececec"></div><svg class="a" style="left:1018px;top:261px" width="8" height="5" viewBox="0 0 8 5"><path d="M0.5 0.5 H7.5 L4 4.5 Z" fill="#222"/></svg><div class="a" style="left:1037px;top:252px;width:69px;height:25px;background:#fff;border:1px solid #000"></div><div class="t" style="left:1037px;width:69px;text-align:center;top:260.0px;font-size:9.4px;color:#000;">Refresh List</div><div class="a" style="left:1114px;top:254px;width:45px;height:21px;background:#119a11;border:0px solid #000"></div><div class="t" style="left:1114px;width:45px;text-align:center;top:259.9px;font-size:9.5px;color:#fff;">Start</div><div class="a" style="left:782px;top:292px;width:413px;height:171px;border:1px solid #dcdcdc"></div><div class="t" style="left:788px;top:284.7px;font-size:11px;color:#000;background:#fff;padding:1px 2px">Video Settings</div><div class="a" style="left:1115px;top:295px;width:51px;height:32px;background:#fff;border:1px solid #000"></div><div class="t" style="left:1115px;width:51px;text-align:center;top:306.9px;font-size:9.5px;color:#000;">Reset</div><div class="t" style="left:815px;width:290px;text-align:center;top:311.4px;font-size:13px;font-weight:bold;color:#000">Image Brightness</div><div class="t" style="left:788px;top:331.8px;font-size:10.5px;color:#000;">Dim</div><div class="t" style="left:1130px;top:331.8px;font-size:10.5px;color:#000;">Bright</div><div class="a" style="left:815px;top:331px;width:298px;height:4px;background:#e7e7e7;border:1px solid #d6d6d6"></div><div class="a" style="left:820px;top:346px;width:1px;height:3px;background:#c4c4c4"></div><div class="a" style="left:839px;top:346px;width:1px;height:3px;background:#c4c4c4"></div><div class="a" style="left:858px;top:346px;width:1px;height:3px;background:#c4c4c4"></div><div class="a" style="left:878px;top:346px;width:1px;height:3px;background:#c4c4c4"></div><div class="a" style="left:897px;top:346px;width:1px;height:3px;background:#c4c4c4"></div><div class="a" style="left:916px;top:346px;width:1px;height:3px;background:#c4c4c4"></div><div class="a" style="left:935px;top:346px;width:1px;height:3px;background:#c4c4c4"></div><div class="a" style="left:954px;top:346px;width:1px;height:3px;background:#c4c4c4"></div><div class="a" style="left:974px;top:346px;width:1px;height:3px;background:#c4c4c4"></div><div class="a" style="left:993px;top:346px;width:1px;height:3px;background:#c4c4c4"></div><div class="a" style="left:1012px;top:346px;width:1px;height:3px;background:#c4c4c4"></div><div class="a" style="left:1031px;top:346px;width:1px;height:3px;background:#c4c4c4"></div><div class="a" style="left:1050px;top:346px;width:1px;height:3px;background:#c4c4c4"></div><div class="a" style="left:1070px;top:346px;width:1px;height:3px;background:#c4c4c4"></div><div class="a" style="left:1089px;top:346px;width:1px;height:3px;background:#c4c4c4"></div><div class="a" style="left:1108px;top:346px;width:1px;height:3px;background:#c4c4c4"></div><svg class="a" style="left:955px;top:324px" width="12" height="20" viewBox="0 0 12 20"><path d="M0.5 0.5 H11.5 V14 L6 19.5 L0.5 14 Z" fill="#1b74d2" stroke="#155fb0" stroke-width="1"/></svg><div class="t" style="left:815px;width:290px;text-align:center;top:361.4px;font-size:13px;font-weight:bold;color:#000">Image Contrast</div><div class="t" style="left:788px;top:381.8px;font-size:10.5px;color:#000;">Dim</div><div class="t" style="left:1130px;top:381.8px;font-size:10.5px;color:#000;">Bright</div><div class="a" style="left:815px;top:381px;width:298px;height:4px;background:#e7e7e7;border:1px solid #d6d6d6"></div><div class="a" style="left:820px;top:396px;width:1px;height:3px;background:#c4c4c4"></div><div class="a" style="left:839px;top:396px;width:1px;height:3px;background:#c4c4c4"></div><div class="a" style="left:858px;top:396px;width:1px;height:3px;background:#c4c4c4"></div><div class="a" style="left:878px;top:396px;width:1px;height:3px;background:#c4c4c4"></div><div class="a" style="left:897px;top:396px;width:1px;height:3px;background:#c4c4c4"></div><div class="a" style="left:916px;top:396px;width:1px;height:3px;background:#c4c4c4"></div><div class="a" style="left:935px;top:396px;width:1px;height:3px;background:#c4c4c4"></div><div class="a" style="left:954px;top:396px;width:1px;height:3px;background:#c4c4c4"></div><div class="a" style="left:974px;top:396px;width:1px;height:3px;background:#c4c4c4"></div><div class="a" style="left:993px;top:396px;width:1px;height:3px;background:#c4c4c4"></div><div class="a" style="left:1012px;top:396px;width:1px;height:3px;background:#c4c4c4"></div><div class="a" style="left:1031px;top:396px;width:1px;height:3px;background:#c4c4c4"></div><div class="a" style="left:1050px;top:396px;width:1px;height:3px;background:#c4c4c4"></div><div class="a" style="left:1070px;top:396px;width:1px;height:3px;background:#c4c4c4"></div><div class="a" style="left:1089px;top:396px;width:1px;height:3px;background:#c4c4c4"></div><div class="a" style="left:1108px;top:396px;width:1px;height:3px;background:#c4c4c4"></div><svg class="a" style="left:959px;top:374px" width="12" height="20" viewBox="0 0 12 20"><path d="M0.5 0.5 H11.5 V14 L6 19.5 L0.5 14 Z" fill="#1b74d2" stroke="#155fb0" stroke-width="1"/></svg><div class="t" style="left:815px;width:290px;text-align:center;top:413.4px;font-size:13px;font-weight:bold;color:#000">Image Saturation</div><div class="t" style="left:788px;top:433.8px;font-size:10.5px;color:#000;">Dim</div><div class="t" style="left:1130px;top:433.8px;font-size:10.5px;color:#000;">Bright</div><div class="a" style="left:815px;top:433px;width:298px;height:4px;background:#e7e7e7;border:1px solid #d6d6d6"></div><div class="a" style="left:820px;top:448px;width:1px;height:3px;background:#c4c4c4"></div><div class="a" style="left:849px;top:448px;width:1px;height:3px;background:#c4c4c4"></div><div class="a" style="left:878px;top:448px;width:1px;height:3px;background:#c4c4c4"></div><div class="a" style="left:906px;top:448px;width:1px;height:3px;background:#c4c4c4"></div><div class="a" style="left:935px;top:448px;width:1px;height:3px;background:#c4c4c4"></div><div class="a" style="left:964px;top:448px;width:1px;height:3px;background:#c4c4c4"></div><div class="a" style="left:993px;top:448px;width:1px;height:3px;background:#c4c4c4"></div><div class="a" style="left:1022px;top:448px;width:1px;height:3px;background:#c4c4c4"></div><div class="a" style="left:1050px;top:448px;width:1px;height:3px;background:#c4c4c4"></div><div class="a" style="left:1079px;top:448px;width:1px;height:3px;background:#c4c4c4"></div><div class="a" style="left:1108px;top:448px;width:1px;height:3px;background:#c4c4c4"></div><svg class="a" style="left:959px;top:426px" width="12" height="20" viewBox="0 0 12 20"><path d="M0.5 0.5 H11.5 V14 L6 19.5 L0.5 14 Z" fill="#1b74d2" stroke="#155fb0" stroke-width="1"/></svg><div class="a" style="left:784px;top:489px;width:189px;height:43px;border:1px solid #dcdcdc"></div><div class="t" style="left:791px;top:481.7px;font-size:10.6px;color:#000;background:#fff;padding:1px 2px">Video Recording</div><div class="a" style="left:792px;top:502px;width:75px;height:32px;background:#fff;border:1px solid #000"></div><div class="t" style="left:792px;width:75px;text-align:center;top:513.1px;font-size:10.2px;color:#000;">Start</div><div class="a" style="left:886px;top:502px;width:75px;height:32px;background:#fff;border:1px solid #000"></div><div class="t" style="left:886px;width:75px;text-align:center;top:513.1px;font-size:10.2px;color:#777;">Pause</div><div class="a" style="left:976px;top:494px;width:193px;height:38px;border:1px solid #dcdcdc"></div><div class="t" style="left:983px;top:486.8px;font-size:10.5px;color:#000;background:#fff;padding:1px 2px">Enhancements</div><div class="a" style="left:982px;top:508px;width:13px;height:13px;border:1px solid #333;background:#fff"></div><div class="t" style="left:1001px;top:508.8px;font-size:10.5px;color:#000;">Sharpen Image</div><div class="a" style="left:334px;top:543px;width:30px;height:24px;background:#fff;border:1px solid #000"></div><svg class="a" style="left:340.7px;top:546.7px" width="16.6" height="16.6" viewBox="0 0 16.6 16.6"><defs><linearGradient id="g8" x1="0" y1="0" x2="0.3" y2="1"><stop offset="0" stop-color="#dadada"/><stop offset="1" stop-color="#9a9a9a"/></linearGradient></defs><polygon points="8.30,1.00 9.44,1.09 10.19,2.47 11.08,2.84 12.59,2.39 13.46,3.14 13.26,4.70 13.76,5.52 15.24,6.04 15.51,7.16 14.43,8.30 14.36,9.26 15.24,10.56 14.80,11.61 13.26,11.90 12.64,12.64 12.59,14.21 11.61,14.80 10.19,14.13 9.26,14.36 8.30,15.60 7.16,15.51 6.41,14.13 5.52,13.76 4.01,14.21 3.14,13.46 3.34,11.90 2.84,11.08 1.36,10.56 1.09,9.44 2.17,8.30 2.24,7.34 1.36,6.04 1.80,4.99 3.34,4.70 3.96,3.96 4.01,2.39 4.99,1.80 6.41,2.47 7.34,2.24" fill="url(#g8)" stroke="#b0b0b0" stroke-width=".5" stroke-linejoin="round"/><circle cx="8.3" cy="8.3" r="3.796" fill="none" stroke="#8a8a8a" stroke-width="1" opacity=".45"/><circle cx="8.3" cy="8.3" r="2.3" fill="#fff"/></svg><div class="a" style="left:370px;top:543px;width:118px;height:24px;background:#fff;border:1px solid #000"></div><div class="t" style="left:370px;width:118px;text-align:center;top:549.9px;font-size:10.5px;color:#000;">Full Screen</div><div class="a" style="left:512px;top:547px;width:13px;height:13px;border:1px solid #333;background:#fff"></div><div class="t" style="left:531px;top:547.8px;font-size:10.5px;color:#000;">Pause</div><div class="a" style="left:598px;top:547px;width:13px;height:13px;border:1px solid #333;background:#fff"></div><div class="t" style="left:617px;top:547.8px;font-size:10.5px;color:#000;">Hide Settings</div><div class="t" style="left:732px;top:547.7px;font-size:10.8px;color:#000;">Tracking</div><div class="t" style="left:1219.5px;top:177.1px;font-size:12px;color:#000;font-weight:bold;letter-spacing:-0.2px">Actions</div><div class="a" style="left:1219px;top:192px;width:120px;height:132px;background:#000;border:1px solid #828282"></div><div class="a" style="left:1321px;top:193px;width:17px;height:130px;background:#f0f0f0"></div><div class="a" style="left:1323px;top:210px;width:13px;height:40px;background:#cdcdcd"></div><svg class="a" style="left:1325px;top:199px" width="9" height="6" viewBox="0 0 9 6"><path d="M1 5 L4.5 1 L8 5" stroke="#606060" stroke-width="1.6" fill="none"/></svg><svg class="a" style="left:1325px;top:312px" width="9" height="6" viewBox="0 0 9 6"><path d="M1 1 L4.5 5 L8 1" stroke="#606060" stroke-width="1.6" fill="none"/></svg><div class="t" style="left:1222px;top:194.2px;font-size:10.6px;color:#fff;">Banana</div><div class="t" style="left:1222px;top:207.2px;font-size:10.6px;color:#fff;">Big-Small</div><div class="t" style="left:1222px;top:220.2px;font-size:10.6px;color:#fff;">blink left</div><div class="t" style="left:1222px;top:233.2px;font-size:10.6px;color:#fff;">blink right</div><div class="t" style="left:1222px;top:246.2px;font-size:10.6px;color:#fff;">blue</div><div class="t" style="left:1222px;top:259.2px;font-size:10.6px;color:#fff;">car break down</div><div class="t" style="left:1222px;top:272.2px;font-size:10.6px;color:#fff;">devil eyes</div><div class="t" style="left:1222px;top:285.2px;font-size:10.6px;color:#fff;">Diag Scan</div><div class="t" style="left:1222px;top:298.2px;font-size:10.6px;color:#fff;">Disco</div><div class="t" style="left:1222px;top:311.2px;font-size:10.6px;color:#fff;">Dots</div><div class="a" style="left:1345px;top:174px;width:63px;height:24px;background:#fff;border:1px solid #000"></div><div class="t" style="left:1345px;width:63px;text-align:center;top:180.8px;font-size:10.8px;color:#000;">Stop</div><div class="a" style="left:1454px;top:174px;width:63px;height:24px;background:#fff;border:1px solid #000"></div><div class="t" style="left:1454px;width:63px;text-align:center;top:180.8px;font-size:10.8px;color:#000;">Settings</div><div class="a" style="left:1523px;top:174px;width:30px;height:24px;background:#fff;border:1px solid #000"></div><svg class="a" style="left:1529.7px;top:177.7px" width="16.6" height="16.6" viewBox="0 0 16.6 16.6"><defs><linearGradient id="g9" x1="0" y1="0" x2="0.3" y2="1"><stop offset="0" stop-color="#dadada"/><stop offset="1" stop-color="#9a9a9a"/></linearGradient></defs><polygon points="8.30,1.00 9.44,1.09 10.19,2.47 11.08,2.84 12.59,2.39 13.46,3.14 13.26,4.70 13.76,5.52 15.24,6.04 15.51,7.16 14.43,8.30 14.36,9.26 15.24,10.56 14.80,11.61 13.26,11.90 12.64,12.64 12.59,14.21 11.61,14.80 10.19,14.13 9.26,14.36 8.30,15.60 7.16,15.51 6.41,14.13 5.52,13.76 4.01,14.21 3.14,13.46 3.34,11.90 2.84,11.08 1.36,10.56 1.09,9.44 2.17,8.30 2.24,7.34 1.36,6.04 1.80,4.99 3.34,4.70 3.96,3.96 4.01,2.39 4.99,1.80 6.41,2.47 7.34,2.24" fill="url(#g9)" stroke="#b0b0b0" stroke-width=".5" stroke-linejoin="round"/><circle cx="8.3" cy="8.3" r="3.796" fill="none" stroke="#8a8a8a" stroke-width="1" opacity=".45"/><circle cx="8.3" cy="8.3" r="2.3" fill="#fff"/></svg><div class="a" style="left:1345px;top:200px;width:208px;height:175px;background:#000"></div><div class="a" style="left:1219px;top:343px;width:120px;height:32px;background:#fff;border:1px solid #000"></div><div class="t" style="left:1219px;width:120px;text-align:center;top:353.8px;font-size:10.8px;color:#000;">Execute</div><div class="t" style="left:1200px;width:84px;text-align:right;top:423.7px;font-size:11px;color:#000">Voice</div><div class="t" style="left:1200px;width:84px;text-align:right;top:453.7px;font-size:11px;color:#000">Emphasis</div><div class="t" style="left:1200px;width:84px;text-align:right;top:483.7px;font-size:11px;color:#000">Rate</div><div class="t" style="left:1200px;width:84px;text-align:right;top:511.7px;font-size:11px;color:#000">Volume</div><div class="a" style="left:1296px;top:419px;width:129px;height:19px;background:#000"></div><div class="a" style="left:1425px;top:419px;width:17px;height:19px;background:#f0f0f0"></div><svg class="a" style="left:1429px;top:427px" width="8" height="5" viewBox="0 0 8 5"><path d="M0.5 0.5 H7.5 L4 4.5 Z" fill="#111"/></svg><div class="t" style="left:1299.5px;top:423.7px;font-size:11px;color:#fff;letter-spacing:-0.2px">Microsoft David Desktop</div><div class="a" style="left:1296px;top:449px;width:129px;height:19px;background:#000"></div><div class="a" style="left:1425px;top:449px;width:17px;height:19px;background:#f0f0f0"></div><svg class="a" style="left:1429px;top:457px" width="8" height="5" viewBox="0 0 8 5"><path d="M0.5 0.5 H7.5 L4 4.5 Z" fill="#111"/></svg><div class="t" style="left:1299.5px;top:453.7px;font-size:11px;color:#fff;letter-spacing:-0.2px">Moderate</div><div class="a" style="left:1296px;top:479px;width:129px;height:19px;background:#000"></div><div class="a" style="left:1425px;top:479px;width:17px;height:19px;background:#f0f0f0"></div><svg class="a" style="left:1429px;top:487px" width="8" height="5" viewBox="0 0 8 5"><path d="M0.5 0.5 H7.5 L4 4.5 Z" fill="#111"/></svg><div class="t" style="left:1299.5px;top:483.7px;font-size:11px;color:#fff;letter-spacing:-0.2px">Slow</div><div class="a" style="left:1295px;top:505px;width:147px;height:30px;border:1px solid #505050;background:#fff"></div><svg class="a" style="left:1297px;top:505px" width="14" height="21" viewBox="0 0 14 21"><path d="M7 1 L13 7 H9.5 V14 H13 L7 20 L1 14 H4.5 V7 H1 Z" fill="#30b030" stroke="#106010" stroke-width="1"/></svg><div class="t" style="left:1311px;width:131px;text-align:center;top:514.5px;font-size:13px;color:#000">100</div><div class="a" style="left:1215px;top:574px;width:142px;height:31px;background:#000;border-top:2px solid #8a8a8a;border-left:2px solid #8a8a8a"></div><div class="a" style="left:1217px;top:582px;width:140px;height:1px;background:#3c3c3c"></div><div class="a" style="left:1217px;top:588px;width:140px;height:1px;background:#3c3c3c"></div><div class="a" style="left:1217px;top:594px;width:140px;height:1px;background:#3c3c3c"></div><div class="a" style="left:1217px;top:600px;width:140px;height:1px;background:#3c3c3c"></div><div class="t" style="left:1360.5px;top:575.7px;font-size:10.8px;color:#a0a0a0;">Clipping</div><div class="t" style="left:1361px;top:596.2px;font-size:10.8px;color:#000;">100</div><div class="a" style="left:1216px;top:608px;width:80px;height:48px;background:#8b0000;border:0px solid #000"></div><div class="t" style="left:1216px;width:80px;text-align:center;top:626.5px;font-size:11.5px;color:#fff;">RECORD</div><div class="a" style="left:1296px;top:607px;width:62px;height:24px;background:#fff;border:1px solid #000"></div><div class="t" style="left:1296px;width:62px;text-align:center;top:613.8px;font-size:10.8px;color:#000;">Repeat</div><div class="a" style="left:1296px;top:631px;width:62px;height:24px;background:#fff;border:1px solid #000"></div><div class="t" style="left:1296px;width:62px;text-align:center;top:637.8px;font-size:10.8px;color:#000;">Stop</div><div class="a" style="left:1215px;top:657px;width:30px;height:25px;background:#fff;border:1px solid #000"></div><svg class="a" style="left:1221.7px;top:661.2px" width="16.6" height="16.6" viewBox="0 0 16.6 16.6"><defs><linearGradient id="g10" x1="0" y1="0" x2="0.3" y2="1"><stop offset="0" stop-color="#dadada"/><stop offset="1" stop-color="#9a9a9a"/></linearGradient></defs><polygon points="8.30,1.00 9.44,1.09 10.19,2.47 11.08,2.84 12.59,2.39 13.46,3.14 13.26,4.70 13.76,5.52 15.24,6.04 15.51,7.16 14.43,8.30 14.36,9.26 15.24,10.56 14.80,11.61 13.26,11.90 12.64,12.64 12.59,14.21 11.61,14.80 10.19,14.13 9.26,14.36 8.30,15.60 7.16,15.51 6.41,14.13 5.52,13.76 4.01,14.21 3.14,13.46 3.34,11.90 2.84,11.08 1.36,10.56 1.09,9.44 2.17,8.30 2.24,7.34 1.36,6.04 1.80,4.99 3.34,4.70 3.96,3.96 4.01,2.39 4.99,1.80 6.41,2.47 7.34,2.24" fill="url(#g10)" stroke="#b0b0b0" stroke-width=".5" stroke-linejoin="round"/><circle cx="8.3" cy="8.3" r="3.796" fill="none" stroke="#8a8a8a" stroke-width="1" opacity=".45"/><circle cx="8.3" cy="8.3" r="2.3" fill="#fff"/></svg><div class="a" style="left:1255px;top:664px;width:11px;height:11px;border:1px solid #333;background:#fff"></div><svg class="a" style="left:1255px;top:664px" width="11" height="11" viewBox="0 0 13 13"><path d="M2.5 6.5 L5.3 9.5 L10.5 3" stroke="#000" stroke-width="1.6" fill="none"/></svg><div class="t" style="left:1272px;top:664.2px;font-size:10.8px;color:#000;">Pause</div><div class="a" style="left:1215px;top:682px;width:143px;height:24px;background:#fff;border:1px solid #000"></div><div class="t" style="left:1215px;width:143px;text-align:center;top:688.8px;font-size:10.8px;color:#000;">Export To SoundBoard</div><div class="a" style="left:1366px;top:623px;width:4px;height:75px;background:#e7e7e7;border:1px solid #d6d6d6"></div><div class="a" style="left:1381px;top:628.0px;width:3px;height:1px;background:#c0c0c0"></div><div class="a" style="left:1381px;top:633.8px;width:3px;height:1px;background:#c0c0c0"></div><div class="a" style="left:1381px;top:639.6px;width:3px;height:1px;background:#c0c0c0"></div><div class="a" style="left:1381px;top:645.4px;width:3px;height:1px;background:#c0c0c0"></div><div class="a" style="left:1381px;top:651.2px;width:3px;height:1px;background:#c0c0c0"></div><div class="a" style="left:1381px;top:657.0px;width:3px;height:1px;background:#c0c0c0"></div><div class="a" style="left:1381px;top:662.8px;width:3px;height:1px;background:#c0c0c0"></div><div class="a" style="left:1381px;top:668.6px;width:3px;height:1px;background:#c0c0c0"></div><div class="a" style="left:1381px;top:674.4px;width:3px;height:1px;background:#c0c0c0"></div><div class="a" style="left:1381px;top:680.2px;width:3px;height:1px;background:#c0c0c0"></div><div class="a" style="left:1381px;top:686.0px;width:3px;height:1px;background:#c0c0c0"></div><div class="a" style="left:1381px;top:691.8px;width:3px;height:1px;background:#c0c0c0"></div><svg class="a" style="left:1359px;top:655px" width="20" height="12" viewBox="0 0 20 12"><path d="M0.5 0.5 H13 L19 6 L13 11.5 H0.5 Z" fill="#1b74d2" stroke="#155fb0"/></svg><div class="t" style="left:1424.5px;top:575.7px;font-size:10.8px;color:#000;">Init</div><div class="a" style="left:1421px;top:591px;width:40px;height:27px;background:#fff;border:1px solid #000"></div><svg class="a" style="left:1432.7px;top:595.7px" width="16.6" height="16.6" viewBox="0 0 16.6 16.6"><defs><linearGradient id="g11" x1="0" y1="0" x2="0.3" y2="1"><stop offset="0" stop-color="#dadada"/><stop offset="1" stop-color="#9a9a9a"/></linearGradient></defs><polygon points="8.30,1.00 9.44,1.09 10.19,2.47 11.08,2.84 12.59,2.39 13.46,3.14 13.26,4.70 13.76,5.52 15.24,6.04 15.51,7.16 14.43,8.30 14.36,9.26 15.24,10.56 14.80,11.61 13.26,11.90 12.64,12.64 12.59,14.21 11.61,14.80 10.19,14.13 9.26,14.36 8.30,15.60 7.16,15.51 6.41,14.13 5.52,13.76 4.01,14.21 3.14,13.46 3.34,11.90 2.84,11.08 1.36,10.56 1.09,9.44 2.17,8.30 2.24,7.34 1.36,6.04 1.80,4.99 3.34,4.70 3.96,3.96 4.01,2.39 4.99,1.80 6.41,2.47 7.34,2.24" fill="url(#g11)" stroke="#b0b0b0" stroke-width=".5" stroke-linejoin="round"/><circle cx="8.3" cy="8.3" r="3.796" fill="none" stroke="#8a8a8a" stroke-width="1" opacity=".45"/><circle cx="8.3" cy="8.3" r="2.3" fill="#fff"/></svg><div class="a" style="left:1460px;top:591px;width:81px;height:27px;background:#fff;border:1px solid #000"></div><div class="t" style="left:1460px;width:81px;text-align:center;top:599.3px;font-size:10.8px;color:#000;">Start</div><div class="a" style="left:1421px;top:617px;width:146px;height:75px;background:#000"></div><div class="a" style="left:1567px;top:617px;width:16px;height:75px;background:#f0f0f0"></div><svg class="a" style="left:1570px;top:623px" width="9" height="6" viewBox="0 0 9 6"><path d="M1 5 L4.5 1 L8 5" stroke="#b8b8b8" stroke-width="1.6" fill="none"/></svg><svg class="a" style="left:1570px;top:680px" width="9" height="6" viewBox="0 0 9 6"><path d="M1 1 L4.5 5 L8 1" stroke="#b8b8b8" stroke-width="1.6" fill="none"/></svg><div class="a" style="left:13px;top:613px;width:40px;height:30px;background:#fff;border:1px solid #000"></div><svg class="a" style="left:24.7px;top:619.2px" width="16.6" height="16.6" viewBox="0 0 16.6 16.6"><defs><linearGradient id="g12" x1="0" y1="0" x2="0.3" y2="1"><stop offset="0" stop-color="#dadada"/><stop offset="1" stop-color="#9a9a9a"/></linearGradient></defs><polygon points="8.30,1.00 9.44,1.09 10.19,2.47 11.08,2.84 12.59,2.39 13.46,3.14 13.26,4.70 13.76,5.52 15.24,6.04 15.51,7.16 14.43,8.30 14.36,9.26 15.24,10.56 14.80,11.61 13.26,11.90 12.64,12.64 12.59,14.21 11.61,14.80 10.19,14.13 9.26,14.36 8.30,15.60 7.16,15.51 6.41,14.13 5.52,13.76 4.01,14.21 3.14,13.46 3.34,11.90 2.84,11.08 1.36,10.56 1.09,9.44 2.17,8.30 2.24,7.34 1.36,6.04 1.80,4.99 3.34,4.70 3.96,3.96 4.01,2.39 4.99,1.80 6.41,2.47 7.34,2.24" fill="url(#g12)" stroke="#b0b0b0" stroke-width=".5" stroke-linejoin="round"/><circle cx="8.3" cy="8.3" r="3.796" fill="none" stroke="#8a8a8a" stroke-width="1" opacity=".45"/><circle cx="8.3" cy="8.3" r="2.3" fill="#fff"/></svg><div class="a" style="left:61px;top:614px;width:84px;height:28px;background:#fff;border:1px solid #000"></div><div class="t" style="left:61px;width:84px;text-align:center;top:622.8px;font-size:10.8px;color:#000;">Stop</div><div class="a" style="left:153px;top:614px;width:84px;height:28px;background:#fff;border:1px solid #000"></div><div class="t" style="left:153px;width:84px;text-align:center;top:622.8px;font-size:10.8px;color:#000;">Clean</div><div class="t" style="left:248px;top:621.2px;font-size:10.8px;color:#dcdcdc;">Clipping</div><div class="t" style="left:538px;top:620.7px;font-size:10.8px;color:#000;">100</div><div class="a" style="left:9px;top:643px;width:540px;height:80px;background:#fff;border-top:2px solid #000;border-left:2px solid #000"></div><div class="a" style="left:531px;top:645px;width:18px;height:80px;background:#f0f0f0"></div><div class="a" style="left:533px;top:662px;width:14px;height:60px;background:#cdcdcd"></div><svg class="a" style="left:535px;top:650px" width="9" height="6" viewBox="0 0 9 6"><path d="M1 5 L4.5 1 L8 5" stroke="#505050" stroke-width="1.6" fill="none"/></svg><div class="a" style="left:11px;top:666px;width:40px;height:1px;background:#a8a8a8"></div><div class="a" style="left:50px;top:645px;width:1px;height:22px;background:#a8a8a8"></div><div class="t" style="left:14px;top:650.3000000000001px;font-size:10.8px;color:#000;">0</div><div class="a" style="left:50px;top:644px;width:481px;height:23px;background:#8a8a8a"></div><div class="a" style="left:51px;top:645px;width:329px;height:21px;background:#fff;border:1px solid #000"></div><div class="t" style="left:51px;width:329px;text-align:center;top:650.3px;font-size:10.8px;color:#000;">You Haunt Me.mp3</div><div class="a" style="left:381px;top:645px;width:49px;height:21px;background:#fff;border:1px solid #000"></div><div class="t" style="left:381px;width:49px;text-align:center;top:650.3px;font-size:10.8px;color:#000;">Play</div><div class="a" style="left:431px;top:645px;width:49px;height:21px;background:#fff;border:1px solid #000"></div><div class="t" style="left:431px;width:49px;text-align:center;top:650.3px;font-size:10.8px;color:#000;">Edit</div><div class="a" style="left:481px;top:645px;width:49px;height:21px;background:#fff;border:1px solid #000"></div><div class="t" style="left:481px;width:49px;text-align:center;top:650.3px;font-size:10.8px;color:#000;">Delete</div><div class="a" style="left:11px;top:688px;width:40px;height:1px;background:#a8a8a8"></div><div class="a" style="left:50px;top:667px;width:1px;height:22px;background:#a8a8a8"></div><div class="t" style="left:14px;top:672.3000000000001px;font-size:10.8px;color:#000;">1</div><div class="a" style="left:50px;top:666px;width:481px;height:23px;background:#8a8a8a"></div><div class="a" style="left:51px;top:667px;width:329px;height:21px;background:#fff;border:1px solid #000"></div><div class="t" style="left:51px;width:329px;text-align:center;top:672.3px;font-size:10.8px;color:#000;">I Believe I Can Fly.mp3</div><div class="a" style="left:381px;top:667px;width:49px;height:21px;background:#fff;border:1px solid #000"></div><div class="t" style="left:381px;width:49px;text-align:center;top:672.3px;font-size:10.8px;color:#000;">Play</div><div class="a" style="left:431px;top:667px;width:49px;height:21px;background:#fff;border:1px solid #000"></div><div class="t" style="left:431px;width:49px;text-align:center;top:672.3px;font-size:10.8px;color:#000;">Edit</div><div class="a" style="left:481px;top:667px;width:49px;height:21px;background:#fff;border:1px solid #000"></div><div class="t" style="left:481px;width:49px;text-align:center;top:672.3px;font-size:10.8px;color:#000;">Delete</div><div class="a" style="left:11px;top:710px;width:40px;height:1px;background:#a8a8a8"></div><div class="a" style="left:50px;top:689px;width:1px;height:22px;background:#a8a8a8"></div><div class="t" style="left:14px;top:694.3000000000001px;font-size:10.8px;color:#000;">2</div><div class="a" style="left:50px;top:688px;width:481px;height:23px;background:#8a8a8a"></div><div class="a" style="left:51px;top:689px;width:329px;height:21px;background:#fff;border:1px solid #000"></div><div class="t" style="left:51px;width:329px;text-align:center;top:694.3px;font-size:10.8px;color:#000;">Lose Yourself To Dance.mp3</div><div class="a" style="left:381px;top:689px;width:49px;height:21px;background:#fff;border:1px solid #000"></div><div class="t" style="left:381px;width:49px;text-align:center;top:694.3px;font-size:10.8px;color:#000;">Play</div><div class="a" style="left:431px;top:689px;width:49px;height:21px;background:#fff;border:1px solid #000"></div><div class="t" style="left:431px;width:49px;text-align:center;top:694.3px;font-size:10.8px;color:#000;">Edit</div><div class="a" style="left:481px;top:689px;width:49px;height:21px;background:#fff;border:1px solid #000"></div><div class="t" style="left:481px;width:49px;text-align:center;top:694.3px;font-size:10.8px;color:#000;">Delete</div><div class="a" style="left:11px;top:732px;width:40px;height:1px;background:#a8a8a8"></div><div class="a" style="left:50px;top:711px;width:1px;height:22px;background:#a8a8a8"></div><div class="t" style="left:14px;top:716.3000000000001px;font-size:10.8px;color:#000;">3</div><div class="a" style="left:50px;top:710px;width:481px;height:23px;background:#8a8a8a"></div><div class="a" style="left:51px;top:711px;width:329px;height:21px;background:#fff;border:1px solid #000"></div><div class="t" style="left:51px;width:329px;text-align:center;top:716.3px;font-size:10.8px;color:#000;">Groove Click.mp3</div><div class="a" style="left:381px;top:711px;width:49px;height:21px;background:#fff;border:1px solid #000"></div><div class="t" style="left:381px;width:49px;text-align:center;top:716.3px;font-size:10.8px;color:#000;">Play</div><div class="a" style="left:431px;top:711px;width:49px;height:21px;background:#fff;border:1px solid #000"></div><div class="t" style="left:431px;width:49px;text-align:center;top:716.3px;font-size:10.8px;color:#000;">Edit</div><div class="a" style="left:481px;top:711px;width:49px;height:21px;background:#fff;border:1px solid #000"></div><div class="t" style="left:481px;width:49px;text-align:center;top:716.3px;font-size:10.8px;color:#000;">Delete</div><div class="a" style="left:557px;top:651px;width:4px;height:70px;background:#e7e7e7;border:1px solid #dcdcdc"></div><div class="a" style="left:571px;top:656px;width:4px;height:1px;background:#c8c8c8"></div><div class="a" style="left:571px;top:674px;width:4px;height:1px;background:#c8c8c8"></div><div class="a" style="left:571px;top:691px;width:4px;height:1px;background:#c8c8c8"></div><div class="a" style="left:571px;top:709px;width:4px;height:1px;background:#c8c8c8"></div><div class="a" style="left:613px;top:612px;width:30px;height:26px;background:#fff;border:1px solid #000"></div><svg class="a" style="left:619.7px;top:616.7px" width="16.6" height="16.6" viewBox="0 0 16.6 16.6"><defs><linearGradient id="g13" x1="0" y1="0" x2="0.3" y2="1"><stop offset="0" stop-color="#dadada"/><stop offset="1" stop-color="#9a9a9a"/></linearGradient></defs><polygon points="8.30,1.00 9.44,1.09 10.19,2.47 11.08,2.84 12.59,2.39 13.46,3.14 13.26,4.70 13.76,5.52 15.24,6.04 15.51,7.16 14.43,8.30 14.36,9.26 15.24,10.56 14.80,11.61 13.26,11.90 12.64,12.64 12.59,14.21 11.61,14.80 10.19,14.13 9.26,14.36 8.30,15.60 7.16,15.51 6.41,14.13 5.52,13.76 4.01,14.21 3.14,13.46 3.34,11.90 2.84,11.08 1.36,10.56 1.09,9.44 2.17,8.30 2.24,7.34 1.36,6.04 1.80,4.99 3.34,4.70 3.96,3.96 4.01,2.39 4.99,1.80 6.41,2.47 7.34,2.24" fill="url(#g13)" stroke="#b0b0b0" stroke-width=".5" stroke-linejoin="round"/><circle cx="8.3" cy="8.3" r="3.796" fill="none" stroke="#8a8a8a" stroke-width="1" opacity=".45"/><circle cx="8.3" cy="8.3" r="2.3" fill="#fff"/></svg><div class="a" style="left:650px;top:613px;width:65px;height:24px;background:#ff8000;border:0px solid #000"></div><div class="t" style="left:650px;width:65px;text-align:center;top:619.7px;font-size:11px;color:#fff;">Panic</div><div class="a" style="left:665px;top:647px;width:30px;height:30px;background:#fff;border:1px solid #000"></div><svg class="a" style="left:666px;top:648px" width="28" height="28" viewBox="0 0 28 28"><defs><linearGradient id="g14" x1="0" y1="0" x2="0" y2="1"><stop offset="0" stop-color="#a8c8ea"/><stop offset=".55" stop-color="#5a86bc"/><stop offset="1" stop-color="#2a5288"/></linearGradient><linearGradient id="g15" x1="0" y1="0" x2="1" y2="0"><stop offset="0" stop-color="#3a6aa8"/><stop offset=".5" stop-color="#8cc0f0"/><stop offset="1" stop-color="#3a6aa8"/></linearGradient></defs><g transform="rotate(0 14 14)"><path d="M9.3 18 H19.2 V25.5 Q19.2 26 18.7 26 H9.8 Q9.3 26 9.3 25.5 Z" fill="url(#g15)" stroke="#3a5f92" stroke-width=".6"/><path d="M14.1 2.6 L24.4 17.4 Q24.6 18.8 23.4 18.8 H4.8 Q3.6 18.8 3.8 17.4 Z" fill="url(#g14)" stroke="#2f4f80" stroke-width=".6"/></g></svg><div class="a" style="left:614px;top:679px;width:30px;height:30px;background:#fff;border:1px solid #000"></div><svg class="a" style="left:615px;top:680px" width="28" height="28" viewBox="0 0 28 28"><defs><linearGradient id="g16" x1="0" y1="0" x2="0" y2="1"><stop offset="0" stop-color="#a8c8ea"/><stop offset=".55" stop-color="#5a86bc"/><stop offset="1" stop-color="#2a5288"/></linearGradient><linearGradient id="g17" x1="0" y1="0" x2="1" y2="0"><stop offset="0" stop-color="#3a6aa8"/><stop offset=".5" stop-color="#8cc0f0"/><stop offset="1" stop-color="#3a6aa8"/></linearGradient></defs><g transform="rotate(270 14 14)"><path d="M9.3 18 H19.2 V25.5 Q19.2 26 18.7 26 H9.8 Q9.3 26 9.3 25.5 Z" fill="url(#g17)" stroke="#3a5f92" stroke-width=".6"/><path d="M14.1 2.6 L24.4 17.4 Q24.6 18.8 23.4 18.8 H4.8 Q3.6 18.8 3.8 17.4 Z" fill="url(#g16)" stroke="#2f4f80" stroke-width=".6"/></g></svg><div class="a" style="left:650px;top:679px;width:63px;height:30px;background:#fff;border:1px solid #000"></div><div class="t" style="left:650px;width:63px;text-align:center;top:688.8px;font-size:10.8px;color:#000;">Stop</div><div class="a" style="left:719px;top:679px;width:30px;height:30px;background:#fff;border:1px solid #000"></div><svg class="a" style="left:720px;top:680px" width="28" height="28" viewBox="0 0 28 28"><defs><linearGradient id="g18" x1="0" y1="0" x2="0" y2="1"><stop offset="0" stop-color="#a8c8ea"/><stop offset=".55" stop-color="#5a86bc"/><stop offset="1" stop-color="#2a5288"/></linearGradient><linearGradient id="g19" x1="0" y1="0" x2="1" y2="0"><stop offset="0" stop-color="#3a6aa8"/><stop offset=".5" stop-color="#8cc0f0"/><stop offset="1" stop-color="#3a6aa8"/></linearGradient></defs><g transform="rotate(90 14 14)"><path d="M9.3 18 H19.2 V25.5 Q19.2 26 18.7 26 H9.8 Q9.3 26 9.3 25.5 Z" fill="url(#g19)" stroke="#3a5f92" stroke-width=".6"/><path d="M14.1 2.6 L24.4 17.4 Q24.6 18.8 23.4 18.8 H4.8 Q3.6 18.8 3.8 17.4 Z" fill="url(#g18)" stroke="#2f4f80" stroke-width=".6"/></g></svg><div class="a" style="left:665px;top:712px;width:30px;height:30px;background:#fff;border:1px solid #000"></div><svg class="a" style="left:666px;top:713px" width="28" height="28" viewBox="0 0 28 28"><defs><linearGradient id="g20" x1="0" y1="0" x2="0" y2="1"><stop offset="0" stop-color="#a8c8ea"/><stop offset=".55" stop-color="#5a86bc"/><stop offset="1" stop-color="#2a5288"/></linearGradient><linearGradient id="g21" x1="0" y1="0" x2="1" y2="0"><stop offset="0" stop-color="#3a6aa8"/><stop offset=".5" stop-color="#8cc0f0"/><stop offset="1" stop-color="#3a6aa8"/></linearGradient></defs><g transform="rotate(180 14 14)"><path d="M9.3 18 H19.2 V25.5 Q19.2 26 18.7 26 H9.8 Q9.3 26 9.3 25.5 Z" fill="url(#g21)" stroke="#3a5f92" stroke-width=".6"/><path d="M14.1 2.6 L24.4 17.4 Q24.6 18.8 23.4 18.8 H4.8 Q3.6 18.8 3.8 17.4 Z" fill="url(#g20)" stroke="#2f4f80" stroke-width=".6"/></g></svg><div class="a" style="left:775px;top:617px;width:3px;height:104px;background:#e4e4e4"></div><div class="a" style="left:788px;top:622px;width:4px;height:1px;background:#b8b8b8"></div><div class="a" style="left:788px;top:638px;width:4px;height:1px;background:#b8b8b8"></div><div class="a" style="left:788px;top:654px;width:4px;height:1px;background:#b8b8b8"></div><div class="a" style="left:788px;top:671px;width:4px;height:1px;background:#b8b8b8"></div><div class="a" style="left:788px;top:687px;width:4px;height:1px;background:#b8b8b8"></div><div class="a" style="left:788px;top:703px;width:4px;height:1px;background:#b8b8b8"></div><div class="a" style="left:788px;top:719px;width:4px;height:1px;background:#b8b8b8"></div><div class="a" style="left:812px;top:616px;width:149px;height:114px;border:1px solid #dcdcdc"></div><div class="t" style="left:818px;top:608.7px;font-size:10.8px;color:#000;background:#fff;padding:1px 2px">Actions</div><div class="a" style="left:814px;top:625px;width:145px;height:115px;background:#fff;border:1px solid #828282"></div><div class="a" style="left:942px;top:626px;width:16px;height:113px;background:#f0f0f0"></div><div class="a" style="left:944px;top:644px;width:12px;height:21px;background:#cdcdcd"></div><svg class="a" style="left:946px;top:632px" width="9" height="6" viewBox="0 0 9 6"><path d="M1 5 L4.5 1 L8 5" stroke="#606060" stroke-width="1.6" fill="none"/></svg><div class="t" style="left:818.5px;top:628.4000000000001px;font-size:10.8px;color:#000;">Astand</div><div class="t" style="left:818.5px;top:641.5000000000001px;font-size:10.8px;color:#000;">Bow</div><div class="t" style="left:818.5px;top:654.6000000000001px;font-size:10.8px;color:#000;">Calibrate</div><div class="t" style="left:818.5px;top:667.7px;font-size:10.8px;color:#000;">Disco Dance</div><div class="t" style="left:818.5px;top:680.8000000000001px;font-size:10.8px;color:#000;">Down</div><div class="t" style="left:818.5px;top:693.9000000000001px;font-size:10.8px;color:#000;">Duck</div><div class="t" style="left:818.5px;top:707.0000000000001px;font-size:10.8px;color:#000;">Fly</div><div class="t" style="left:818.5px;top:720.1000000000001px;font-size:10.8px;color:#000;">Forward</div><div class="a" style="left:962px;top:616px;width:200px;height:114px;border:1px solid #dcdcdc"></div><div class="t" style="left:970px;top:609.2px;font-size:10.8px;color:#000;background:#fff;padding:1px 2px">Frames</div><div class="a" style="left:965px;top:625px;width:194px;height:27px;background:#fff;border:1px solid #000"></div><div class="t" style="left:965px;width:194px;text-align:center;top:633.3px;font-size:10.8px;color:#000;">Jump To...</div><div class="a" style="left:965px;top:652px;width:194px;height:88px;background:#fff;border:1px solid #828282"></div><div class="a" style="left:1142px;top:653px;width:16px;height:86px;background:#f0f0f0"></div><div class="a" style="left:1144px;top:671px;width:12px;height:17px;background:#cdcdcd"></div><svg class="a" style="left:1146px;top:659px" width="9" height="6" viewBox="0 0 9 6"><path d="M1 5 L4.5 1 L8 5" stroke="#606060" stroke-width="1.6" fill="none"/></svg><div class="t" style="left:968px;top:656.0px;font-size:10.8px;color:#000;">a1</div><div class="t" style="left:968px;top:668.9px;font-size:10.8px;color:#000;">a2</div><div class="t" style="left:968px;top:681.8px;font-size:10.8px;color:#000;">a3</div><div class="t" style="left:968px;top:694.7px;font-size:10.8px;color:#000;">a4</div><div class="t" style="left:968px;top:707.6px;font-size:10.8px;color:#000;">a5</div><div class="t" style="left:968px;top:720.5px;font-size:10.8px;color:#000;">a6</div><svg class="a" style="left:1145px;top:708px" width="9" height="6" viewBox="0 0 9 6"><path d="M1 1 L4.5 5 L8 1" stroke="#505050" stroke-width="1.6" fill="none"/></svg><div class="a" style="left:1170px;top:715px;width:192px;height:8px;background:#d0dce8;border-radius:5px 5px 0 0"></div><div class="a" style="left:1168px;top:713px;width:196px;height:2px;background:#2a3a48"></div><div class="a" style="left:1583px;top:139px;width:17px;height:581px;background:#f0f0f0;border-left:1px solid #e6f0f8"></div><div class="a" style="left:1584px;top:156px;width:15px;height:529px;background:#cdcdcd"></div><svg class="a" style="left:1585px;top:143px" width="13" height="9" viewBox="0 0 13 9"><path d="M2 7 L6.5 2.5 L11 7" stroke="#606060" stroke-width="1.6" fill="none"/></svg><div class="a" style="left:0px;top:720px;width:142px;height:140px;background:#fff"></div><div class="a" style="left:4px;top:726px;width:12px;height:12px;border:1px solid #333;background:#fff"></div><svg class="a" style="left:4px;top:726px" width="12" height="12" viewBox="0 0 13 13"><path d="M2.5 6.5 L5.3 9.5 L10.5 3" stroke="#000" stroke-width="1.6" fill="none"/></svg><div class="t" style="left:23px;top:726.2px;font-size:10.8px;color:#000;">Always Show</div><div class="a" style="left:4px;top:752px;width:133px;height:28px;background:#fff;border:1px solid #000"></div><div class="t" style="left:4px;width:133px;text-align:center;top:760.8px;font-size:10.8px;color:#888;">Hide</div><div class="a" style="left:4px;top:788px;width:133px;height:28px;background:#fff;border:1px solid #000"></div><div class="t" style="left:4px;width:133px;text-align:center;top:796.8px;font-size:10.8px;color:#000;">Copy</div><div class="a" style="left:4px;top:823px;width:133px;height:28px;background:#fff;border:1px solid #000"></div><div class="t" style="left:4px;width:133px;text-align:center;top:831.8px;font-size:10.8px;color:#000;">Clear</div><div class="a" style="left:141px;top:720px;width:1459px;height:140px;background:#000;border:1px solid #3f8fd0;box-shadow:inset 0 0 0 1px #f4f8fc"></div><div class="a" style="left:147px;top:724px;width:1px;height:12px;background:#fff"></div><div class="a" style="left:1581px;top:721px;width:18px;height:138px;background:#f0f0f0"></div><svg class="a" style="left:1586px;top:728px" width="9" height="6" viewBox="0 0 9 6"><path d="M1 5 L4.5 1 L8 5" stroke="#c0c0c0" stroke-width="1.8" fill="none"/></svg><svg class="a" style="left:1586px;top:847px" width="9" height="6" viewBox="0 0 9 6"><path d="M1 1 L4.5 5 L8 1" stroke="#c0c0c0" stroke-width="1.8" fill="none"/></svg><div class="a" style="left:0px;top:860px;width:1600px;height:40px;background:linear-gradient(90deg,#343434 0,#333 620px,#2a2727 700px,#1d1a1a 800px,#1b1818 1200px,#262424 1260px,#2e2e2e 1350px,#2e2e2e 100%)"></div><svg class="a" style="left:15px;top:871px" width="18" height="18" viewBox="0 0 18 18"><path d="M0 2.5 L7.5 1.5 V8.3 H0 Z M8.5 1.3 L18 0 V8.3 H8.5 Z M0 9.3 H7.5 V16.3 L0 15.3 Z M8.5 9.3 H18 V17.8 L8.5 16.5 Z" fill="#fff"/></svg><svg class="a" style="left:63px;top:870px" width="19" height="20" viewBox="0 0 19 20"><circle cx="12" cy="7" r="5.3" stroke="#fff" stroke-width="1.4" fill="none"/><path d="M8.3 10.8 L1.5 18" stroke="#fff" stroke-width="1.5"/></svg><svg class="a" style="left:111px;top:871px" width="18" height="18" viewBox="0 0 18 18"><path d="M1 1 V3 M1 1 H9 V3 M1 15 V17 H9 V15" stroke="#fff" stroke-width="1.2" fill="none"/><rect x="1.6" y="4.5" width="8" height="9" stroke="#fff" stroke-width="1.2" fill="none"/><path d="M15 1 V4 M15 9 V17" stroke="#fff" stroke-width="1.3"/><rect x="13.5" y="5" width="3" height="3" fill="#fff"/></svg><svg class="a" style="left:160px;top:868px" width="23" height="23" viewBox="0 0 23 23"><path d="M2 13 Q2 2 12 2 Q22 2 22 12 V14 H8 Q8.5 19 14 19 Q18 19 21 17 V21.5 Q18 23 13 23 Q3 23 2 13 Z M8 10 H16 Q16 6 12 6 Q8.5 6 8 10 Z" fill="#1d8be6"/></svg><svg class="a" style="left:209px;top:870px" width="22" height="19" viewBox="0 0 22 19"><path d="M0 2 H8 L10 4 H22 V19 H0 Z" fill="#f8d775"/><path d="M0 6 H22 V19 H0 Z" fill="#fbe39a"/><path d="M5 11 H17 V18 H14 V14 H8 V18 H5 Z" fill="#2f8fd8"/></svg><svg class="a" style="left:257px;top:868px" width="23" height="24" viewBox="0 0 23 24"><path d="M7 7 Q7 1 11.5 1 Q16 1 16 7" stroke="#fff" stroke-width="1.6" fill="none"/><rect x="0" y="6" width="23" height="18" fill="#fff"/><rect x="6" y="10" width="5" height="5" fill="#f25022"/><rect x="12" y="10" width="5" height="5" fill="#7fba00"/><rect x="6" y="16" width="5" height="5" fill="#00a4ef"/><rect x="12" y="16" width="5" height="5" fill="#ffb900"/></svg><svg class="a" style="left:306px;top:871px" width="21" height="19" viewBox="0 0 21 19"><rect x="0" y="1" width="19" height="17" fill="#76b6e8"/><rect x="17" y="0" width="4" height="19" fill="#a8d2f2"/><circle cx="9.5" cy="9.5" r="6.5" fill="#f08a2a"/><path d="M7.5 6 L13 9.5 L7.5 13 Z" fill="#fff"/></svg><svg class="a" style="left:355px;top:869px" width="24" height="24" viewBox="0 0 24 24"><circle cx="12" cy="12" r="11.5" fill="#0d2034"/><circle cx="12" cy="12" r="9.5" fill="#16293f" stroke="#2e5e8e" stroke-width=".8"/><text x="12" y="16" text-anchor="middle" font-family="Liberation Sans" font-style="italic" font-weight="bold" font-size="11" fill="#fff">hp</text></svg><svg class="a" style="left:403px;top:871px" width="25" height="17" viewBox="0 0 25 17"><rect x="0" y="0" width="25" height="17" fill="#1f4f8c"/><rect x="0" y="0" width="25" height="8" fill="#2c64a8"/><path d="M4 8 L9 12.5 L14 6 Q17 4 21 7" stroke="#fff" stroke-width="2.5" fill="none"/></svg><svg class="a" style="left:452px;top:868px" width="23" height="22" viewBox="0 0 23 22"><rect x="0" y="1" width="21" height="20" fill="#fbe0d0"/><rect x="0" y="1" width="21" height="20" fill="none" stroke="#e07040" stroke-width=".8"/><text x="6.5" y="15" text-anchor="middle" font-family="Liberation Sans" font-weight="bold" font-size="14" fill="#d24726">P</text><circle cx="14" cy="13" r="4" fill="none" stroke="#d24726" stroke-width="1.2"/><path d="M16 16 L22 14 V21 H14 Z" fill="#fff"/></svg><svg class="a" style="left:502px;top:868px" width="22" height="22" viewBox="0 0 22 22"><rect x="0" y="1" width="20" height="20" fill="#dbe7f8"/><rect x="0" y="1" width="20" height="20" fill="none" stroke="#3a6fc8" stroke-width=".8"/><text x="9" y="15" text-anchor="middle" font-family="Liberation Sans" font-weight="bold" font-size="14" fill="#1f56b4">W</text><path d="M14 15 L22 13 V21 H12 Z" fill="#fff"/></svg><svg class="a" style="left:551px;top:868px" width="23" height="22" viewBox="0 0 23 22"><rect x="0" y="1" width="21" height="20" fill="#fbd46a"/><rect x="0" y="1" width="21" height="20" fill="none" stroke="#d8a020" stroke-width=".8"/><circle cx="8" cy="11" r="5" fill="none" stroke="#c88a10" stroke-width="2.4"/><path d="M14 8 H22 V16 H14 Z" fill="#fff4d8"/></svg><svg class="a" style="left:600px;top:868px" width="22" height="22" viewBox="0 0 22 22"><rect x="0" y="1" width="20" height="20" fill="#d9efd9"/><rect x="0" y="1" width="20" height="20" fill="none" stroke="#3c9a3c" stroke-width=".8"/><text x="8" y="15" text-anchor="middle" font-family="Liberation Sans" font-weight="bold" font-size="14" fill="#2a8a2a">X</text><path d="M13 13 L21 11 V21 H11 Z" fill="#fff"/></svg><svg class="a" style="left:649px;top:867px" width="23" height="23" viewBox="0 0 23 23"><defs><radialGradient id="ffx" cx=".5" cy=".3" r=".7"><stop offset="0" stop-color="#ffde3a"/><stop offset=".5" stop-color="#ff8a16"/><stop offset="1" stop-color="#e02050"/></radialGradient></defs><circle cx="11.5" cy="12" r="11" fill="url(#ffx)"/><circle cx="12.5" cy="11" r="6" fill="#4a2b9a"/><path d="M8 6 Q14 2 17 8 Q14 6 11 9 Q14 12 10 15 Q6 12 8 6 Z" fill="#ff9a20"/></svg><div class="a" style="left:641px;top:898px;width:40px;height:2px;background:#99ccf2"></div><svg class="a" style="left:698px;top:867px" width="38" height="30" viewBox="0 0 38 30"><rect x="0" y="0.7" width="24" height="24" fill="#3b5aa8"/><rect x="6" y="6.7" width="12" height="12" fill="#fff"/><path d="M10.5 24.7 V14.5 H8.8 V12.3 H10.5 V10.5 Q10.5 7.5 13.5 7.5 H15.5 V9.8 H14 Q13.1 9.8 13.1 10.8 V12.3 H15.5 L15.1 14.5 H13.1 V24.7 Z" fill="#3b5aa8"/><circle cx="24.5" cy="21" r="8.3" fill="#262222" stroke="#aaa" stroke-width=".9"/><text x="24.5" y="25.5" text-anchor="middle" font-family="Liberation Sans" font-size="12.5" fill="#fff">28</text></svg><svg class="a" style="left:747px;top:868px" width="24" height="24" viewBox="0 0 24 24"><rect x="0" y="0" width="24" height="24" fill="#1e88f0"/><ellipse cx="12" cy="11.5" rx="6.5" ry="6" fill="#fff"/><path d="M8 16 L7.5 19 L11 17 Z" fill="#fff"/><path d="M8.5 13 L11 10.5 L13 12 L15.5 9.5" stroke="#1e88f0" stroke-width="1.3" fill="none"/></svg><svg class="a" style="left:795px;top:866px" width="24" height="25" viewBox="0 0 24 25"><path d="M1 1 H12 V5 H5.2 V9 H11 V13 H5.2 V21 H1 Z" fill="#f4401a"/><polygon points="22.60,16.00 22.48,17.32 20.45,17.98 20.02,18.90 20.82,20.89 19.89,21.82 17.90,21.02 16.98,21.45 16.32,23.48 15.00,23.60 13.99,21.71 13.02,21.45 11.20,22.58 10.11,21.82 10.56,19.73 9.98,18.90 7.86,18.60 7.52,17.32 9.20,16.00 9.29,14.99 7.86,13.40 8.42,12.20 10.56,12.27 11.27,11.56 11.20,9.42 12.40,8.86 13.99,10.29 15.00,10.20 16.32,8.52 17.60,8.86 17.90,10.98 18.73,11.56 20.82,11.11 21.58,12.20 20.45,14.02 20.71,14.99" fill="#2a48d0" stroke="#1a2890" stroke-width=".6"/><circle cx="15" cy="16" r="2.6" fill="#1b1818"/></svg><svg class="a" style="left:844px;top:868px" width="26" height="24" viewBox="0 0 26 24"><ellipse cx="11.5" cy="9" rx="10" ry="6" fill="#f4e8ea" stroke="#c0384a" stroke-width="1" transform="rotate(-25 11.5 9)"/><path d="M1.5 12 Q4 16 10 15" stroke="#b8a0a4" stroke-width="1.5" fill="none"/><path d="M12 5 L15.5 15 M17.5 6 L13 15" stroke="#4a6aa0" stroke-width="1.1"/><ellipse cx="14" cy="19" rx="2.3" ry="3.2" stroke="#2a8ac0" stroke-width="1.4" fill="none"/><ellipse cx="19" cy="17" rx="2.3" ry="3.2" stroke="#2a8ac0" stroke-width="1.4" fill="none" transform="rotate(-30 19 17)"/></svg><svg class="a" style="left:893px;top:868px" width="24" height="24" viewBox="0 0 24 24"><defs><linearGradient id="npg" x1="0" y1="1" x2="1" y2="0"><stop offset="0" stop-color="#2a8aa8"/><stop offset=".5" stop-color="#7cc8dc"/><stop offset="1" stop-color="#e8f6f8"/></linearGradient></defs><path d="M8 1 L20 3 L23 19 L3 22 Z" fill="#e8eef0"/><path d="M8 1 L19 2.5 L16 19.5 L2.5 21 Z" fill="url(#npg)"/></svg><svg class="a" style="left:944px;top:872px" width="21" height="15" viewBox="0 0 21 15"><rect x="0" y="0" width="21" height="15" fill="#3aa8e8"/><rect x="1" y="1" width="19" height="13" fill="#8ccdf2"/><circle cx="6" cy="6" r="3.3" fill="#f0b020"/><path d="M6 6 V2.7 A3.3 3.3 0 0 1 9.3 6 Z" fill="#2a70b8"/><rect x="12" y="3" width="6" height="2" fill="#2a70b8"/><rect x="12" y="7" width="6" height="2" fill="#2a70b8"/><rect x="2" y="11" width="16" height="2" fill="#f0e060"/></svg><div class="a" style="left:980px;top:860px;width:48px;height:40px;background:#423e3e"></div><div class="a" style="left:980px;top:898px;width:48px;height:2px;background:#99ccf2"></div><svg class="a" style="left:992px;top:868px" width="24" height="24" viewBox="0 0 24 24"><defs><radialGradient id="ezt" cx=".5" cy=".45" r=".6"><stop offset="0" stop-color="#8ee0ff"/><stop offset=".7" stop-color="#4ab8f8"/><stop offset="1" stop-color="#1a7ae0"/></radialGradient></defs><rect x="0" y="0" width="24" height="24" rx="3" fill="url(#ezt)"/><path d="M4.5 20.5 V10 Q4.5 4 12 4 Q19.5 4 19.5 10 V20.5 Z" fill="#1a6eb8"/><circle cx="12" cy="9.5" r="3" fill="none" stroke="#3a9ae0" stroke-width="1"/><path d="M4.5 14.5 H19.5 M4.5 17.5 H19.5" stroke="#1288d8" stroke-width="1" fill="none"/></svg><svg class="a" style="left:1041px;top:867px" width="26" height="25" viewBox="0 0 26 25"><rect x="1" y="2" width="8" height="10" fill="#c8ccd0" stroke="#707880" stroke-width=".6"/><rect x="14" y="1" width="10" height="8" fill="#5ab8f0" stroke="#3a7ab0" stroke-width=".6"/><path d="M2 16 H24" stroke="#d8d8d8" stroke-width="1.2"/><circle cx="10" cy="14" r="5.5" fill="#b8e0f8" stroke="#6aa8d8" stroke-width="1"/><path d="M6 18 L1 24" stroke="#f0b820" stroke-width="2.6"/></svg><div class="a" style="left:1033px;top:898px;width:40px;height:2px;background:#99ccf2"></div><svg class="a" style="left:1090px;top:870px" width="24" height="19" viewBox="0 0 24 19"><path d="M0 6 L12 0 L24 6 V19 H0 Z" fill="#fff"/><path d="M0 6 L12 13 L24 6" stroke="#1b1818" stroke-width="1" fill="none"/><path d="M4 8 L21 7 L14 13 Z" fill="#1b1818"/></svg><div class="a" style="left:1082px;top:898px;width:40px;height:2px;background:#99ccf2"></div><svg class="a" style="left:1272px;top:870px" width="24" height="24" viewBox="0 0 24 24"><circle cx="11" cy="11" r="10.5" fill="#fff"/><circle cx="11" cy="11" r="9" fill="#1e90d8"/><text x="11" y="16" text-anchor="middle" font-family="Liberation Sans" font-weight="bold" font-size="14" fill="#fff">?</text><circle cx="19" cy="19" r="4.5" fill="#f0a020"/><rect x="18.4" y="16.5" width="1.2" height="4.5" fill="#fff"/></svg><svg class="a" style="left:1319px;top:871px" width="17" height="17" viewBox="0 0 17 17"><circle cx="11.5" cy="4" r="3" stroke="#fff" stroke-width="1.2" fill="none"/><path d="M6 15 Q6 8 11.5 8 Q16.5 8 16.5 14" stroke="#fff" stroke-width="1.2" fill="none"/><circle cx="5" cy="8" r="2.5" stroke="#fff" stroke-width="1.2" fill="none"/><path d="M0.8 16.5 Q0.8 11.5 5 11.5 Q7 11.5 8 12.5" stroke="#fff" stroke-width="1.2" fill="none"/></svg><svg class="a" style="left:1356px;top:877px" width="14" height="8" viewBox="0 0 14 8"><path d="M1 7 L7 1 L13 7" stroke="#fff" stroke-width="1.3" fill="none"/></svg><svg class="a" style="left:1378px;top:873px" width="18" height="13" viewBox="0 0 18 13"><path d="M3 0 V3 M6 0 V3 M1.5 3 H7.5 V6 Q7.5 8.5 4.5 8.5 Q1.5 8.5 1.5 6 Z M4.5 8.5 V12" stroke="#fff" stroke-width="1.1" fill="none"/><rect x="7" y="3" width="9.5" height="8" stroke="#fff" stroke-width="1.1" fill="none"/><path d="M9.5 5 L14 9 M14 5 L9.5 9" stroke="#fff" stroke-width="1.1"/></svg><svg class="a" style="left:1405px;top:872px" width="15" height="16" viewBox="0 0 15 16"><path d="M1 15 Q1 3 14 1.5 M4 15 Q4.5 7 14 5 M7 15 Q7.5 10.5 14 9" stroke="#fff" stroke-width="1.2" fill="none"/><circle cx="12.5" cy="13.5" r="1.6" fill="#fff"/></svg><svg class="a" style="left:1426px;top:872px" width="18" height="16" viewBox="0 0 18 16"><path d="M1 5.5 H4 L8 1.5 V14.5 L4 10.5 H1 Z" stroke="#fff" stroke-width="1.1" fill="none"/><path d="M10.5 5 Q12 8 10.5 11 M13 3 Q15.5 8 13 13" stroke="#fff" stroke-width="1.1" fill="none"/><path d="M15.5 1 Q19 8 15.5 15" stroke="#777" stroke-width="1.1" fill="none"/></svg><div class="t" style="left:1453.5px;top:873.8000000000001px;font-size:11.5px;color:#fff;">ENG</div><div class="t" style="left:1501.5px;top:865.3000000000001px;font-size:11.5px;color:#fff;">07:55</div><div class="t" style="left:1486.5px;top:882.3000000000001px;font-size:11.5px;color:#fff;">24-12-2018</div><svg class="a" style="left:1558px;top:869px" width="28" height="28" viewBox="0 0 28 28"><path d="M1 1 H17 V12 H5 L1 16 Z" fill="#fff"/><path d="M4 4.5 H14 M4 7.5 H14 M4 10 H10" stroke="#2e2e2e" stroke-width="1.2"/><circle cx="17.5" cy="18" r="9" fill="#2e2e2e" stroke="#aaa" stroke-width="1"/><text x="17.5" y="22.3" text-anchor="middle" font-family="Liberation Sans" font-weight="bold" font-size="12" fill="#fff">14</text></svg><div class="a" style="left:1595px;top:862px;width:1px;height:38px;background:#5a5a5a"></div>
</body></html>
